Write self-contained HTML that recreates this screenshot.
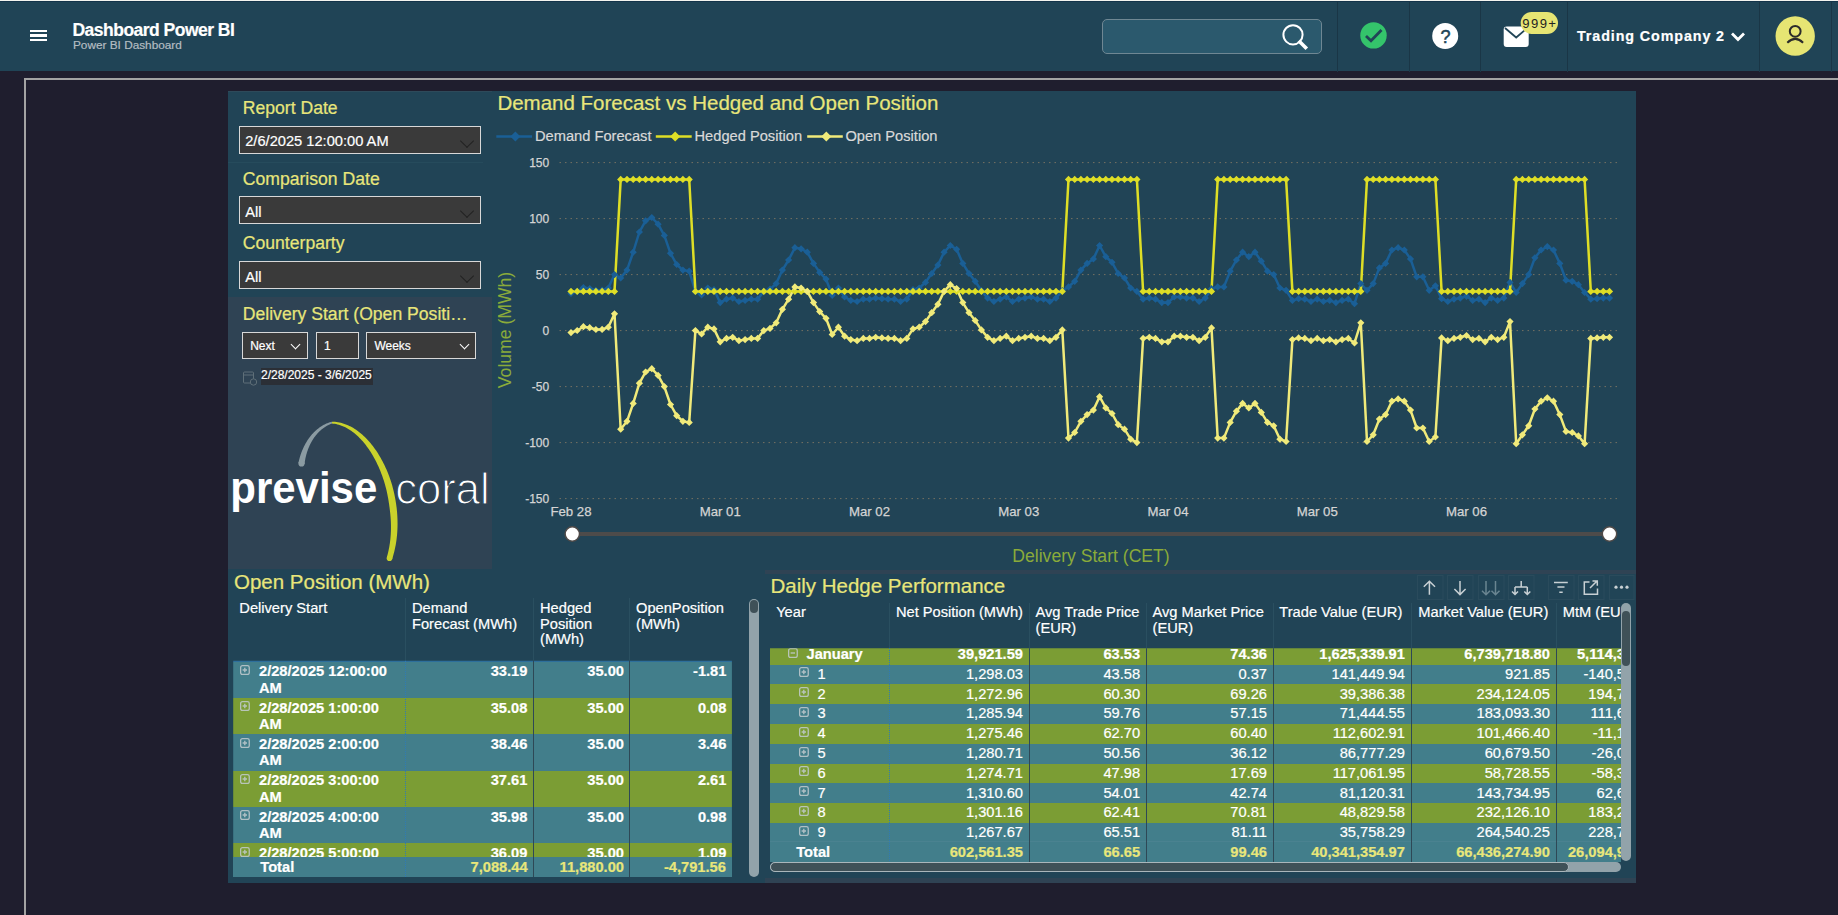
<!DOCTYPE html>
<html><head><meta charset="utf-8">
<style>
*{margin:0;padding:0;box-sizing:border-box}
html,body{width:1838px;height:915px;overflow:hidden;background:#1f1e2e;font-family:"Liberation Sans",sans-serif}
body *{-webkit-text-stroke:0.2px currentColor}
.a{position:absolute}
#hdr{position:absolute;left:0;top:0;width:1838px;height:71px;background:#204456;border-top:1px solid #f4f4ef;box-shadow:inset 0 1px 0 #14344a}
.vd{position:absolute;top:1px;width:1px;height:70px;background:#1a3646}
.t{position:absolute;white-space:nowrap;font-size:14.67px;line-height:16px;color:#fff}
.b{font-weight:bold}
.yl{color:#e8e67a}
.num{text-align:right}
.r{position:absolute}
.bt{position:absolute;white-space:nowrap;font-size:14.67px;line-height:16.2px;color:#fff;font-weight:bold}
.exp{position:absolute;width:9.4px;height:9.6px;border:1.3px solid #c3ccd0;border-radius:2px;opacity:.8}
.exp:before{content:"";position:absolute;left:1.4px;top:2.9px;width:4px;height:1.2px;background:#c3ccd0}
.exp:after{content:"";position:absolute;left:2.8px;top:1.5px;width:1.2px;height:4px;background:#c3ccd0}
.exp.minus:after{display:none}
.sl{position:absolute;white-space:nowrap;font-size:17.6px;line-height:20px;color:#e8e67a;margin-left:0.3px}
.dd{position:absolute;left:239.2px;width:241.8px;height:27.9px;background:#3a3a3a;border:1.5px solid #d8d8d8}
.dd span{position:absolute;left:5px;top:6.4px;font-size:14.67px;line-height:16px;color:#fff;white-space:nowrap}
.dd i{position:absolute;right:8px;top:9px;width:10px;height:10px;border-right:1px solid #222;border-bottom:1px solid #222;transform:rotate(45deg)}
.hh{position:absolute;white-space:nowrap;font-size:14.67px;line-height:15.6px;color:#fff;margin-top:2px}
.tb{position:absolute;top:575.5px;width:25.5px;height:24px;border:1px solid #2a4b5c}
</style></head>
<body>
<!-- HEADER -->
<div id="hdr">
 <div class="a" style="left:30px;top:29px;width:16.7px;height:2.3px;background:#fff"></div>
 <div class="a" style="left:30px;top:33.4px;width:16.7px;height:2.3px;background:#fff"></div>
 <div class="a" style="left:30px;top:38px;width:16.7px;height:2.3px;background:#fff"></div>
 <div class="a" style="left:72.5px;top:18.6px;font-size:17.5px;line-height:20px;font-weight:bold;color:#fff;white-space:nowrap;letter-spacing:-0.52px">Dashboard Power BI</div>
 <div class="a" style="left:73px;top:37px;font-size:11.8px;line-height:14px;color:#b4bdc2;white-space:nowrap">Power BI Dashboard</div>
 <div class="a" style="left:1102px;top:18px;width:220px;height:35px;background:#2b596d;border:1px solid #6f8793;border-radius:5px"></div>
 <svg class="a" style="left:1270px;top:10px" width="50" height="50">
  <circle cx="23" cy="23.8" r="9.6" fill="none" stroke="#fff" stroke-width="2"/>
  <path d="M30,31 L35.5,36.5" stroke="#fff" stroke-width="3.6" stroke-linecap="square"/>
 </svg>
 <div class="vd" style="left:1337px"></div>
 <div class="vd" style="left:1409px"></div>
 <div class="vd" style="left:1480px"></div>
 <div class="vd" style="left:1566.5px"></div>
 <div class="vd" style="left:1759px"></div>
 <div class="vd" style="left:1831px"></div>
 <svg class="a" style="left:1350px;top:11px" width="50" height="50">
  <circle cx="23.5" cy="23.4" r="13.2" fill="#34c46b"/>
  <path d="M16,24 L21,28.8 L31.5,18" fill="none" stroke="#214557" stroke-width="2.8"/>
 </svg>
 <svg class="a" style="left:1420px;top:11.3px" width="50" height="50">
  <circle cx="25.2" cy="24" r="13" fill="#fff"/>
  <text x="25.4" y="30.6" font-family="Liberation Sans" font-size="18" fill="#214557" stroke="#214557" stroke-width="0.5" text-anchor="middle">?</text>
 </svg>
 <svg class="a" style="left:1490px;top:-0.9px" width="80" height="60">
  <rect x="13.7" y="26.5" width="25" height="20.5" rx="3" fill="#fff"/>
  <path d="M15,28 L26.2,37.5 L37.4,28" fill="none" stroke="#214557" stroke-width="1.8"/>
  <rect x="30.7" y="12" width="37.3" height="22" rx="11" fill="#e6e573"/>
  <text x="49.5" y="28.2" font-family="Liberation Mono" font-size="13" fill="#222" text-anchor="middle" letter-spacing="0.9">999+</text>
 </svg>
 <div class="a" style="left:1577px;top:26px;font-size:14.3px;line-height:18px;font-weight:bold;color:#fff;white-space:nowrap;letter-spacing:0.9px">Trading Company 2</div>
 <svg class="a" style="left:1725px;top:20px" width="30" height="30">
  <path d="M7,12.6 L13,18.6 L19,12.6" fill="none" stroke="#fff" stroke-width="2.8"/>
 </svg>
 <svg class="a" style="left:1770px;top:10px" width="50" height="50">
  <circle cx="25.2" cy="25" r="19.7" fill="#e6e573"/>
  <circle cx="25.2" cy="20.3" r="5.4" fill="none" stroke="#2b2b2b" stroke-width="2"/>
  <path d="M17.3,31.7 Q25.2,24 33.1,31.7" fill="none" stroke="#2b2b2b" stroke-width="2"/>
 </svg>
</div>
<!-- FRAME -->
<div class="a" style="left:24px;top:78px;width:1814px;height:2px;background:#a3a3a3"></div>
<div class="a" style="left:24px;top:78px;width:2px;height:837px;background:#a3a3a3"></div>

<!-- SLICER PANEL -->
<div class="a" style="left:228px;top:91px;width:264px;height:206px;background:#214456"></div>
<div class="a" style="left:228px;top:162px;width:255px;height:1px;background:#264b5c"></div>
<div class="a" style="left:228px;top:91px;width:264px;height:1px;background:#2e4a5a"></div>
<div class="sl" style="left:242.5px;top:97.5px">Report Date</div>
<div class="dd" style="top:125.9px"><span>2/6/2025 12:00:00 AM</span><i></i></div>
<div class="sl" style="left:242.5px;top:168.5px">Comparison Date</div>
<div class="dd" style="top:196.3px"><span>All</span><i></i></div>
<div class="sl" style="left:242.5px;top:233px">Counterparty</div>
<div class="dd" style="top:261.2px"><span>All</span><i></i></div>

<!-- DELIVERY PANEL -->
<div class="a" style="left:228px;top:297px;width:264px;height:272px;background:#2f4354"></div>
<div class="sl" style="left:242.5px;top:303.5px">Delivery Start (Open Positi…</div>
<div class="a" style="left:242.2px;top:332.1px;width:65.5px;height:27.4px;background:#3a3a3a;border:1.3px solid #d8d8d8">
 <span class="a" style="left:7px;top:5.5px;font-size:12px;line-height:14px;color:#fff">Next</span>
 <i class="a" style="left:49px;top:7.5px;width:7px;height:7px;border-right:1.2px solid #fff;border-bottom:1.2px solid #fff;transform:rotate(45deg)"></i>
</div>
<div class="a" style="left:316px;top:332.1px;width:42.8px;height:27.4px;background:#3a3a3a;border:1.3px solid #d8d8d8">
 <span class="a" style="left:7px;top:5.5px;font-size:12px;line-height:14px;color:#fff">1</span>
</div>
<div class="a" style="left:366.4px;top:332.1px;width:109.4px;height:27.4px;background:#3a3a3a;border:1.3px solid #d8d8d8">
 <span class="a" style="left:7px;top:5.5px;font-size:12px;line-height:14px;color:#fff">Weeks</span>
 <i class="a" style="left:93.5px;top:7.5px;width:7px;height:7px;border-right:1.2px solid #fff;border-bottom:1.2px solid #fff;transform:rotate(45deg)"></i>
</div>
<svg class="a" style="left:240px;top:368px" width="20" height="20">
 <rect x="3.5" y="4" width="10" height="11" rx="1" fill="none" stroke="#5f6f78" stroke-width="1"/>
 <line x1="3.5" y1="7" x2="13.5" y2="7" stroke="#5f6f78"/>
 <circle cx="13.5" cy="14" r="3.2" fill="#2f4354" stroke="#5f6f78"/>
</svg>
<div class="a" style="left:261px;top:368.4px;width:111.8px;height:16.4px;background:#2b2f36"></div>
<div class="a" style="left:261px;top:367.5px;font-size:12px;line-height:14px;color:#fff;white-space:nowrap">2/28/2025 - 3/6/2025</div>
<!-- LOGO -->
<svg class="a" style="left:228px;top:400px" width="264" height="170">
 
 <path d="M76.56,63.99 L76.65,63.17 L76.75,62.38 L76.87,61.58 L76.99,60.78 L77.13,59.97 L77.28,59.16 L77.44,58.34 L77.61,57.53 L77.80,56.71 L78.00,55.89 L78.21,55.08 L78.43,54.26 L78.67,53.44 L78.92,52.62 L79.18,51.80 L79.45,50.99 L79.74,50.18 L80.03,49.37 L80.34,48.56 L80.67,47.75 L81.00,46.95 L81.35,46.16 L81.71,45.37 L82.09,44.58 L82.47,43.80 L82.87,43.03 L83.28,42.26 L83.71,41.50 L84.14,40.75 L84.59,40.01 L85.06,39.27 L85.53,38.54 L86.02,37.83 L86.52,37.12 L87.04,36.42 L87.56,35.73 L88.10,35.06 L88.66,34.39 L89.22,33.74 L89.80,33.09 L90.39,32.46 L91.00,31.85 L91.62,31.25 L92.25,30.66 L92.90,30.08 L93.56,29.52 L94.23,28.98 L94.92,28.45 L95.62,27.93 L96.33,27.44 L97.06,26.96 L97.80,26.49 L98.56,26.05 L99.33,25.62 L100.11,25.21 L100.91,24.82 L101.73,24.45 L102.56,24.10 L103.40,23.77 L104.27,23.46 L103.73,21.74 L102.81,21.99 L101.90,22.27 L100.99,22.57 L100.10,22.89 L99.22,23.24 L98.35,23.60 L97.49,23.99 L96.65,24.40 L95.82,24.83 L95.00,25.28 L94.19,25.75 L93.40,26.24 L92.61,26.75 L91.84,27.27 L91.09,27.81 L90.34,28.38 L89.61,28.95 L88.89,29.55 L88.19,30.16 L87.50,30.78 L86.82,31.42 L86.15,32.07 L85.49,32.74 L84.85,33.42 L84.23,34.12 L83.61,34.82 L83.01,35.54 L82.42,36.27 L81.84,37.02 L81.28,37.77 L80.73,38.53 L80.19,39.30 L79.67,40.08 L79.16,40.87 L78.66,41.67 L78.18,42.48 L77.71,43.29 L77.25,44.11 L76.80,44.94 L76.37,45.77 L75.95,46.61 L75.54,47.45 L75.15,48.30 L74.77,49.16 L74.40,50.01 L74.05,50.87 L73.71,51.74 L73.38,52.60 L73.06,53.47 L72.76,54.34 L72.47,55.21 L72.19,56.08 L71.93,56.95 L71.67,57.82 L71.44,58.70 L71.21,59.57 L71.00,60.44 L70.80,61.31 L70.61,62.17 L70.44,63.01Z" fill="#8b9ba2"/><circle cx="73.5" cy="63.5" r="3.1" fill="#8b9ba2"/><path d="M103.94,23.50 L105.36,23.65 L106.75,23.86 L108.13,24.12 L109.49,24.44 L110.83,24.80 L112.17,25.22 L113.48,25.69 L114.79,26.20 L116.08,26.76 L117.35,27.36 L118.61,28.02 L119.86,28.71 L121.09,29.45 L122.31,30.23 L123.51,31.05 L124.70,31.91 L125.88,32.81 L127.04,33.75 L128.18,34.73 L129.31,35.75 L130.43,36.80 L131.53,37.88 L132.61,39.00 L133.68,40.15 L134.73,41.34 L135.77,42.56 L136.79,43.80 L137.79,45.08 L138.78,46.38 L139.75,47.71 L140.70,49.07 L141.63,50.46 L142.55,51.87 L143.45,53.30 L144.33,54.75 L145.19,56.23 L146.03,57.73 L146.86,59.25 L147.66,60.78 L148.45,62.34 L149.21,63.91 L149.96,65.50 L150.68,67.10 L151.39,68.71 L152.07,70.34 L152.73,71.99 L153.37,73.64 L153.99,75.30 L154.59,76.97 L155.16,78.65 L155.72,80.34 L156.25,82.03 L156.75,83.73 L157.24,85.43 L157.70,87.14 L158.13,88.84 L158.55,90.55 L158.93,92.26 L159.30,93.97 L159.64,95.68 L159.87,96.90 L160.09,98.12 L160.30,99.33 L160.50,100.53 L160.69,101.72 L160.88,102.90 L161.06,104.07 L161.22,105.24 L161.38,106.40 L161.54,107.55 L161.68,108.69 L161.82,109.83 L161.96,110.95 L162.09,112.07 L162.21,113.18 L162.32,114.28 L162.42,115.38 L162.52,116.47 L162.60,117.55 L162.68,118.63 L162.75,119.70 L162.80,120.76 L162.85,121.82 L162.89,122.87 L162.92,123.92 L162.95,124.96 L162.96,125.99 L162.97,127.02 L162.96,128.04 L162.95,129.05 L162.93,130.06 L162.90,131.07 L162.87,132.07 L162.82,133.06 L162.77,134.05 L162.71,135.03 L162.64,136.01 L162.56,136.99 L162.47,137.95 L162.38,138.92 L162.27,139.88 L162.16,140.83 L162.04,141.79 L161.92,142.73 L161.78,143.68 L161.64,144.61 L161.49,145.55 L161.33,146.48 L161.16,147.41 L160.99,148.33 L160.80,149.25 L160.61,150.17 L160.42,151.08 L160.21,151.99 L160.00,152.90 L159.78,153.80 L159.55,154.70 L159.31,155.60 L159.07,156.50 L158.82,157.40 L164.18,159.00 L164.47,158.08 L164.76,157.15 L165.03,156.21 L165.30,155.27 L165.56,154.32 L165.82,153.37 L166.06,152.42 L166.30,151.46 L166.53,150.50 L166.75,149.54 L166.96,148.57 L167.17,147.60 L167.37,146.62 L167.56,145.64 L167.74,144.65 L167.91,143.66 L168.07,142.66 L168.23,141.66 L168.37,140.65 L168.51,139.64 L168.64,138.63 L168.77,137.61 L168.88,136.58 L168.98,135.55 L169.08,134.51 L169.16,133.47 L169.24,132.42 L169.31,131.37 L169.37,130.31 L169.42,129.25 L169.46,128.18 L169.50,127.10 L169.52,126.02 L169.54,124.93 L169.54,123.84 L169.54,122.74 L169.53,121.63 L169.50,120.52 L169.47,119.40 L169.43,118.27 L169.38,117.14 L169.32,116.00 L169.25,114.86 L169.18,113.70 L169.09,112.55 L168.99,111.38 L168.88,110.21 L168.77,109.03 L168.63,107.84 L168.48,106.65 L168.32,105.45 L168.14,104.24 L167.96,103.03 L167.76,101.81 L167.56,100.58 L167.34,99.34 L167.11,98.10 L166.87,96.85 L166.62,95.59 L166.36,94.32 L165.97,92.53 L165.56,90.74 L165.12,88.94 L164.65,87.15 L164.15,85.36 L163.62,83.58 L163.07,81.80 L162.49,80.03 L161.89,78.27 L161.26,76.51 L160.61,74.76 L159.93,73.03 L159.22,71.30 L158.50,69.59 L157.74,67.89 L156.97,66.21 L156.17,64.54 L155.34,62.89 L154.50,61.25 L153.63,59.63 L152.73,58.04 L151.82,56.46 L150.89,54.90 L149.93,53.37 L148.95,51.86 L147.95,50.37 L146.93,48.91 L145.89,47.47 L144.83,46.07 L143.75,44.69 L142.65,43.34 L141.53,42.02 L140.40,40.73 L139.24,39.47 L138.07,38.25 L136.88,37.06 L135.67,35.91 L134.45,34.80 L133.20,33.72 L131.94,32.68 L130.67,31.68 L129.38,30.73 L128.08,29.81 L126.76,28.94 L125.42,28.11 L124.07,27.33 L122.71,26.59 L121.34,25.90 L119.95,25.26 L118.56,24.67 L117.15,24.13 L115.73,23.64 L114.29,23.21 L112.85,22.82 L111.40,22.50 L109.95,22.22 L108.48,22.01 L107.01,21.85 L105.53,21.74 L104.06,21.70Z" fill="#c9d22b"/><circle cx="161.5" cy="158.2" r="2.8" fill="#c9d22b"/>
 <text x="2.3" y="103.4" font-family="Liberation Sans" font-weight="bold" font-size="45" fill="#fff" textLength="147" lengthAdjust="spacingAndGlyphs">previse</text>
 <text x="167.2" y="103.6" font-family="Liberation Sans" font-size="44" fill="#fff" textLength="94.5" lengthAdjust="spacingAndGlyphs" stroke="#2f4354" stroke-width="1.2">coral</text>
</svg>

<!-- CHART VISUAL -->
<div class="a" style="left:492px;top:91px;width:1144px;height:479px;background:#214456"></div>

<svg width="1838" height="915" style="position:absolute;left:0;top:0">
 <g stroke="#8a7c66" stroke-width="1" stroke-dasharray="1.5 4" fill="none" opacity="0.8">
  <line x1="559.5" x2="1618" y1="162.6" y2="162.6"/><line x1="559.5" x2="1618" y1="218.6" y2="218.6"/><line x1="559.5" x2="1618" y1="274.6" y2="274.6"/><line x1="559.5" x2="1618" y1="330.6" y2="330.6"/><line x1="559.5" x2="1618" y1="386.6" y2="386.6"/><line x1="559.5" x2="1618" y1="442.6" y2="442.6"/><line x1="559.5" x2="1618" y1="498.6" y2="498.6"/>
 </g>
 <g font-family="Liberation Sans" font-size="12" fill="#d4d4d4" stroke="#d4d4d4" stroke-width="0.25" text-anchor="end">
  <text x="549.2" y="166.9">150</text><text x="549.2" y="222.9">100</text><text x="549.2" y="278.9">50</text><text x="549.2" y="334.9">0</text><text x="549.2" y="390.9">-50</text><text x="549.2" y="446.9">-100</text><text x="549.2" y="502.9">-150</text>
 </g>
 <g font-family="Liberation Sans" font-size="13.2" fill="#d4d4d4" stroke="#d4d4d4" stroke-width="0.25" text-anchor="middle">
  <text x="571.0" y="515.7">Feb 28</text><text x="720.2" y="515.7">Mar 01</text><text x="869.5" y="515.7">Mar 02</text><text x="1018.7" y="515.7">Mar 03</text><text x="1168.0" y="515.7">Mar 04</text><text x="1317.2" y="515.7">Mar 05</text><text x="1466.5" y="515.7">Mar 06</text>
 </g>
 <text transform="translate(511,330) rotate(-90)" font-family="Liberation Sans" font-size="17.6" fill="#8aab3a" text-anchor="middle">Volume (MWh)</text>
 <path d="M571.0,293.4 L577.2,291.3 L583.4,287.5 L589.7,288.5 L595.9,290.3 L602.1,290.2 L608.3,288.0 L614.5,274.6 L620.7,278.0 L627.0,270.1 L633.2,252.2 L639.4,232.0 L645.6,220.8 L651.8,217.5 L658.1,224.2 L664.3,235.4 L670.5,253.3 L676.7,264.5 L682.9,270.1 L689.2,271.2 L695.4,291.4 L701.6,294.8 L707.8,288.0 L714.0,289.7 L720.2,302.6 L726.5,299.2 L732.7,298.1 L738.9,301.5 L745.1,300.4 L751.3,299.2 L757.6,299.2 L763.8,291.4 L770.0,289.2 L776.2,283.6 L782.4,270.1 L788.6,260.0 L794.9,247.7 L801.1,248.8 L807.3,252.2 L813.5,263.4 L819.7,272.4 L826.0,279.1 L832.2,295.3 L838.4,288.0 L844.6,297.0 L850.8,300.4 L857.1,301.5 L863.3,299.2 L869.5,299.2 L875.7,298.1 L881.9,298.7 L888.1,299.2 L894.4,299.2 L900.6,301.5 L906.8,299.2 L913.0,289.7 L919.2,288.0 L925.5,282.4 L931.7,273.5 L937.9,265.1 L944.1,252.2 L950.3,245.5 L956.6,249.3 L962.8,263.4 L969.0,273.5 L975.2,281.3 L981.4,290.7 L987.6,298.1 L993.9,301.5 L1000.1,299.2 L1006.3,297.0 L1012.5,301.5 L1018.7,299.2 L1025.0,298.1 L1031.2,297.0 L1037.4,299.2 L1043.6,299.2 L1049.8,301.5 L1056.0,298.1 L1062.3,290.7 L1068.5,286.9 L1074.7,281.3 L1080.9,270.1 L1087.1,263.4 L1093.4,258.9 L1099.6,245.5 L1105.8,256.7 L1112.0,262.3 L1118.2,273.5 L1124.5,278.0 L1130.7,288.0 L1136.9,291.4 L1143.1,299.2 L1149.3,298.1 L1155.5,299.2 L1161.8,302.6 L1168.0,302.6 L1174.2,297.0 L1180.4,297.0 L1186.6,298.1 L1192.9,298.1 L1199.1,301.5 L1205.3,298.1 L1211.5,288.7 L1217.7,286.9 L1223.9,286.9 L1230.2,271.2 L1236.4,260.0 L1242.6,252.2 L1248.8,256.7 L1255.0,252.2 L1261.3,261.2 L1267.5,271.2 L1273.7,274.6 L1279.9,288.0 L1286.1,290.3 L1292.4,300.4 L1298.6,298.7 L1304.8,299.2 L1311.0,301.5 L1317.2,299.2 L1323.4,301.5 L1329.7,300.4 L1335.9,302.6 L1342.1,300.4 L1348.3,299.2 L1354.5,303.7 L1360.8,283.6 L1367.0,290.3 L1373.2,283.6 L1379.4,267.9 L1385.6,263.4 L1391.9,250.0 L1398.1,247.7 L1404.3,250.0 L1410.5,258.9 L1416.7,276.8 L1422.9,276.8 L1429.2,290.3 L1435.4,285.8 L1441.6,298.7 L1447.8,301.5 L1454.0,299.2 L1460.3,298.1 L1466.5,296.3 L1472.7,300.4 L1478.9,299.2 L1485.1,302.6 L1491.3,298.1 L1497.6,300.4 L1503.8,298.1 L1510.0,282.4 L1516.2,292.5 L1522.4,283.6 L1528.7,274.6 L1534.9,257.8 L1541.1,250.0 L1547.3,246.6 L1553.5,250.0 L1559.8,263.4 L1566.0,280.2 L1572.2,281.3 L1578.4,284.7 L1584.6,292.5 L1590.8,299.2 L1597.1,298.7 L1603.3,298.1 L1609.5,298.1" stroke="#1a5f96" stroke-width="2.5" fill="none" stroke-linejoin="round"/>
 <path d="M571.0,291.4 L577.2,291.4 L583.4,291.4 L589.7,291.4 L595.9,291.4 L602.1,291.4 L608.3,291.4 L614.5,291.4 L620.7,179.4 L627.0,179.4 L633.2,179.4 L639.4,179.4 L645.6,179.4 L651.8,179.4 L658.1,179.4 L664.3,179.4 L670.5,179.4 L676.7,179.4 L682.9,179.4 L689.2,179.4 L695.4,291.4 L701.6,291.4 L707.8,291.4 L714.0,291.4 L720.2,291.4 L726.5,291.4 L732.7,291.4 L738.9,291.4 L745.1,291.4 L751.3,291.4 L757.6,291.4 L763.8,291.4 L770.0,291.4 L776.2,291.4 L782.4,291.4 L788.6,291.4 L794.9,291.4 L801.1,291.4 L807.3,291.4 L813.5,291.4 L819.7,291.4 L826.0,291.4 L832.2,291.4 L838.4,291.4 L844.6,291.4 L850.8,291.4 L857.1,291.4 L863.3,291.4 L869.5,291.4 L875.7,291.4 L881.9,291.4 L888.1,291.4 L894.4,291.4 L900.6,291.4 L906.8,291.4 L913.0,291.4 L919.2,291.4 L925.5,291.4 L931.7,291.4 L937.9,291.4 L944.1,291.4 L950.3,291.4 L956.6,291.4 L962.8,291.4 L969.0,291.4 L975.2,291.4 L981.4,291.4 L987.6,291.4 L993.9,291.4 L1000.1,291.4 L1006.3,291.4 L1012.5,291.4 L1018.7,291.4 L1025.0,291.4 L1031.2,291.4 L1037.4,291.4 L1043.6,291.4 L1049.8,291.4 L1056.0,291.4 L1062.3,291.4 L1068.5,179.4 L1074.7,179.4 L1080.9,179.4 L1087.1,179.4 L1093.4,179.4 L1099.6,179.4 L1105.8,179.4 L1112.0,179.4 L1118.2,179.4 L1124.5,179.4 L1130.7,179.4 L1136.9,179.4 L1143.1,291.4 L1149.3,291.4 L1155.5,291.4 L1161.8,291.4 L1168.0,291.4 L1174.2,291.4 L1180.4,291.4 L1186.6,291.4 L1192.9,291.4 L1199.1,291.4 L1205.3,291.4 L1211.5,291.4 L1217.7,179.4 L1223.9,179.4 L1230.2,179.4 L1236.4,179.4 L1242.6,179.4 L1248.8,179.4 L1255.0,179.4 L1261.3,179.4 L1267.5,179.4 L1273.7,179.4 L1279.9,179.4 L1286.1,179.4 L1292.4,291.4 L1298.6,291.4 L1304.8,291.4 L1311.0,291.4 L1317.2,291.4 L1323.4,291.4 L1329.7,291.4 L1335.9,291.4 L1342.1,291.4 L1348.3,291.4 L1354.5,291.4 L1360.8,291.4 L1367.0,179.4 L1373.2,179.4 L1379.4,179.4 L1385.6,179.4 L1391.9,179.4 L1398.1,179.4 L1404.3,179.4 L1410.5,179.4 L1416.7,179.4 L1422.9,179.4 L1429.2,179.4 L1435.4,179.4 L1441.6,291.4 L1447.8,291.4 L1454.0,291.4 L1460.3,291.4 L1466.5,291.4 L1472.7,291.4 L1478.9,291.4 L1485.1,291.4 L1491.3,291.4 L1497.6,291.4 L1503.8,291.4 L1510.0,291.4 L1516.2,179.4 L1522.4,179.4 L1528.7,179.4 L1534.9,179.4 L1541.1,179.4 L1547.3,179.4 L1553.5,179.4 L1559.8,179.4 L1566.0,179.4 L1572.2,179.4 L1578.4,179.4 L1584.6,179.4 L1590.8,291.4 L1597.1,291.4 L1603.3,291.4 L1609.5,291.4" stroke="#dede26" stroke-width="2.5" fill="none" stroke-linejoin="round"/>
 <path d="M571.0,332.6 L577.2,330.5 L583.4,326.7 L589.7,327.7 L595.9,329.5 L602.1,329.4 L608.3,327.2 L614.5,313.8 L620.7,429.2 L627.0,421.3 L633.2,403.4 L639.4,383.2 L645.6,372.0 L651.8,368.7 L658.1,375.4 L664.3,386.6 L670.5,404.5 L676.7,415.7 L682.9,421.3 L689.2,422.4 L695.4,330.6 L701.6,334.0 L707.8,327.2 L714.0,328.9 L720.2,341.8 L726.5,338.4 L732.7,337.3 L738.9,340.7 L745.1,339.6 L751.3,338.4 L757.6,338.4 L763.8,330.6 L770.0,328.4 L776.2,322.8 L782.4,309.3 L788.6,299.2 L794.9,286.9 L801.1,288.0 L807.3,291.4 L813.5,302.6 L819.7,311.6 L826.0,318.3 L832.2,334.5 L838.4,327.2 L844.6,336.2 L850.8,339.6 L857.1,340.7 L863.3,338.4 L869.5,338.4 L875.7,337.3 L881.9,337.9 L888.1,338.4 L894.4,338.4 L900.6,340.7 L906.8,338.4 L913.0,328.9 L919.2,327.2 L925.5,321.6 L931.7,312.7 L937.9,304.3 L944.1,291.4 L950.3,284.7 L956.6,288.5 L962.8,302.6 L969.0,312.7 L975.2,320.5 L981.4,329.9 L987.6,337.3 L993.9,340.7 L1000.1,338.4 L1006.3,336.2 L1012.5,340.7 L1018.7,338.4 L1025.0,337.3 L1031.2,336.2 L1037.4,338.4 L1043.6,338.4 L1049.8,340.7 L1056.0,337.3 L1062.3,329.9 L1068.5,438.1 L1074.7,432.5 L1080.9,421.3 L1087.1,414.6 L1093.4,410.1 L1099.6,396.7 L1105.8,407.9 L1112.0,413.5 L1118.2,424.7 L1124.5,429.2 L1130.7,439.2 L1136.9,442.6 L1143.1,338.4 L1149.3,337.3 L1155.5,338.4 L1161.8,341.8 L1168.0,341.8 L1174.2,336.2 L1180.4,336.2 L1186.6,337.3 L1192.9,337.3 L1199.1,340.7 L1205.3,337.3 L1211.5,327.9 L1217.7,438.1 L1223.9,438.1 L1230.2,422.4 L1236.4,411.2 L1242.6,403.4 L1248.8,407.9 L1255.0,403.4 L1261.3,412.4 L1267.5,422.4 L1273.7,425.8 L1279.9,439.2 L1286.1,441.5 L1292.4,339.6 L1298.6,337.9 L1304.8,338.4 L1311.0,340.7 L1317.2,338.4 L1323.4,340.7 L1329.7,339.6 L1335.9,341.8 L1342.1,339.6 L1348.3,338.4 L1354.5,342.9 L1360.8,322.8 L1367.0,441.5 L1373.2,434.8 L1379.4,419.1 L1385.6,414.6 L1391.9,401.2 L1398.1,398.9 L1404.3,401.2 L1410.5,410.1 L1416.7,428.0 L1422.9,428.0 L1429.2,441.5 L1435.4,437.0 L1441.6,337.9 L1447.8,340.7 L1454.0,338.4 L1460.3,337.3 L1466.5,335.5 L1472.7,339.6 L1478.9,338.4 L1485.1,341.8 L1491.3,337.3 L1497.6,339.6 L1503.8,337.3 L1510.0,321.6 L1516.2,443.7 L1522.4,434.8 L1528.7,425.8 L1534.9,409.0 L1541.1,401.2 L1547.3,397.8 L1553.5,401.2 L1559.8,414.6 L1566.0,431.4 L1572.2,432.5 L1578.4,435.9 L1584.6,443.7 L1590.8,338.4 L1597.1,337.9 L1603.3,337.3 L1609.5,337.3" stroke="#f0ea7a" stroke-width="2.5" fill="none" stroke-linejoin="round"/>
 <path d="M571.0,289.8l3.6,3.6l-3.6,3.6l-3.6,-3.6zM577.2,287.7l3.6,3.6l-3.6,3.6l-3.6,-3.6zM583.4,283.9l3.6,3.6l-3.6,3.6l-3.6,-3.6zM589.7,284.9l3.6,3.6l-3.6,3.6l-3.6,-3.6zM595.9,286.7l3.6,3.6l-3.6,3.6l-3.6,-3.6zM602.1,286.6l3.6,3.6l-3.6,3.6l-3.6,-3.6zM608.3,284.4l3.6,3.6l-3.6,3.6l-3.6,-3.6zM614.5,271.0l3.6,3.6l-3.6,3.6l-3.6,-3.6zM620.7,274.4l3.6,3.6l-3.6,3.6l-3.6,-3.6zM627.0,266.5l3.6,3.6l-3.6,3.6l-3.6,-3.6zM633.2,248.6l3.6,3.6l-3.6,3.6l-3.6,-3.6zM639.4,228.4l3.6,3.6l-3.6,3.6l-3.6,-3.6zM645.6,217.2l3.6,3.6l-3.6,3.6l-3.6,-3.6zM651.8,213.9l3.6,3.6l-3.6,3.6l-3.6,-3.6zM658.1,220.6l3.6,3.6l-3.6,3.6l-3.6,-3.6zM664.3,231.8l3.6,3.6l-3.6,3.6l-3.6,-3.6zM670.5,249.7l3.6,3.6l-3.6,3.6l-3.6,-3.6zM676.7,260.9l3.6,3.6l-3.6,3.6l-3.6,-3.6zM682.9,266.5l3.6,3.6l-3.6,3.6l-3.6,-3.6zM689.2,267.6l3.6,3.6l-3.6,3.6l-3.6,-3.6zM695.4,287.8l3.6,3.6l-3.6,3.6l-3.6,-3.6zM701.6,291.2l3.6,3.6l-3.6,3.6l-3.6,-3.6zM707.8,284.4l3.6,3.6l-3.6,3.6l-3.6,-3.6zM714.0,286.1l3.6,3.6l-3.6,3.6l-3.6,-3.6zM720.2,299.0l3.6,3.6l-3.6,3.6l-3.6,-3.6zM726.5,295.6l3.6,3.6l-3.6,3.6l-3.6,-3.6zM732.7,294.5l3.6,3.6l-3.6,3.6l-3.6,-3.6zM738.9,297.9l3.6,3.6l-3.6,3.6l-3.6,-3.6zM745.1,296.8l3.6,3.6l-3.6,3.6l-3.6,-3.6zM751.3,295.6l3.6,3.6l-3.6,3.6l-3.6,-3.6zM757.6,295.6l3.6,3.6l-3.6,3.6l-3.6,-3.6zM763.8,287.8l3.6,3.6l-3.6,3.6l-3.6,-3.6zM770.0,285.6l3.6,3.6l-3.6,3.6l-3.6,-3.6zM776.2,280.0l3.6,3.6l-3.6,3.6l-3.6,-3.6zM782.4,266.5l3.6,3.6l-3.6,3.6l-3.6,-3.6zM788.6,256.4l3.6,3.6l-3.6,3.6l-3.6,-3.6zM794.9,244.1l3.6,3.6l-3.6,3.6l-3.6,-3.6zM801.1,245.2l3.6,3.6l-3.6,3.6l-3.6,-3.6zM807.3,248.6l3.6,3.6l-3.6,3.6l-3.6,-3.6zM813.5,259.8l3.6,3.6l-3.6,3.6l-3.6,-3.6zM819.7,268.8l3.6,3.6l-3.6,3.6l-3.6,-3.6zM826.0,275.5l3.6,3.6l-3.6,3.6l-3.6,-3.6zM832.2,291.7l3.6,3.6l-3.6,3.6l-3.6,-3.6zM838.4,284.4l3.6,3.6l-3.6,3.6l-3.6,-3.6zM844.6,293.4l3.6,3.6l-3.6,3.6l-3.6,-3.6zM850.8,296.8l3.6,3.6l-3.6,3.6l-3.6,-3.6zM857.1,297.9l3.6,3.6l-3.6,3.6l-3.6,-3.6zM863.3,295.6l3.6,3.6l-3.6,3.6l-3.6,-3.6zM869.5,295.6l3.6,3.6l-3.6,3.6l-3.6,-3.6zM875.7,294.5l3.6,3.6l-3.6,3.6l-3.6,-3.6zM881.9,295.1l3.6,3.6l-3.6,3.6l-3.6,-3.6zM888.1,295.6l3.6,3.6l-3.6,3.6l-3.6,-3.6zM894.4,295.6l3.6,3.6l-3.6,3.6l-3.6,-3.6zM900.6,297.9l3.6,3.6l-3.6,3.6l-3.6,-3.6zM906.8,295.6l3.6,3.6l-3.6,3.6l-3.6,-3.6zM913.0,286.1l3.6,3.6l-3.6,3.6l-3.6,-3.6zM919.2,284.4l3.6,3.6l-3.6,3.6l-3.6,-3.6zM925.5,278.8l3.6,3.6l-3.6,3.6l-3.6,-3.6zM931.7,269.9l3.6,3.6l-3.6,3.6l-3.6,-3.6zM937.9,261.5l3.6,3.6l-3.6,3.6l-3.6,-3.6zM944.1,248.6l3.6,3.6l-3.6,3.6l-3.6,-3.6zM950.3,241.9l3.6,3.6l-3.6,3.6l-3.6,-3.6zM956.6,245.7l3.6,3.6l-3.6,3.6l-3.6,-3.6zM962.8,259.8l3.6,3.6l-3.6,3.6l-3.6,-3.6zM969.0,269.9l3.6,3.6l-3.6,3.6l-3.6,-3.6zM975.2,277.7l3.6,3.6l-3.6,3.6l-3.6,-3.6zM981.4,287.1l3.6,3.6l-3.6,3.6l-3.6,-3.6zM987.6,294.5l3.6,3.6l-3.6,3.6l-3.6,-3.6zM993.9,297.9l3.6,3.6l-3.6,3.6l-3.6,-3.6zM1000.1,295.6l3.6,3.6l-3.6,3.6l-3.6,-3.6zM1006.3,293.4l3.6,3.6l-3.6,3.6l-3.6,-3.6zM1012.5,297.9l3.6,3.6l-3.6,3.6l-3.6,-3.6zM1018.7,295.6l3.6,3.6l-3.6,3.6l-3.6,-3.6zM1025.0,294.5l3.6,3.6l-3.6,3.6l-3.6,-3.6zM1031.2,293.4l3.6,3.6l-3.6,3.6l-3.6,-3.6zM1037.4,295.6l3.6,3.6l-3.6,3.6l-3.6,-3.6zM1043.6,295.6l3.6,3.6l-3.6,3.6l-3.6,-3.6zM1049.8,297.9l3.6,3.6l-3.6,3.6l-3.6,-3.6zM1056.0,294.5l3.6,3.6l-3.6,3.6l-3.6,-3.6zM1062.3,287.1l3.6,3.6l-3.6,3.6l-3.6,-3.6zM1068.5,283.3l3.6,3.6l-3.6,3.6l-3.6,-3.6zM1074.7,277.7l3.6,3.6l-3.6,3.6l-3.6,-3.6zM1080.9,266.5l3.6,3.6l-3.6,3.6l-3.6,-3.6zM1087.1,259.8l3.6,3.6l-3.6,3.6l-3.6,-3.6zM1093.4,255.3l3.6,3.6l-3.6,3.6l-3.6,-3.6zM1099.6,241.9l3.6,3.6l-3.6,3.6l-3.6,-3.6zM1105.8,253.1l3.6,3.6l-3.6,3.6l-3.6,-3.6zM1112.0,258.7l3.6,3.6l-3.6,3.6l-3.6,-3.6zM1118.2,269.9l3.6,3.6l-3.6,3.6l-3.6,-3.6zM1124.5,274.4l3.6,3.6l-3.6,3.6l-3.6,-3.6zM1130.7,284.4l3.6,3.6l-3.6,3.6l-3.6,-3.6zM1136.9,287.8l3.6,3.6l-3.6,3.6l-3.6,-3.6zM1143.1,295.6l3.6,3.6l-3.6,3.6l-3.6,-3.6zM1149.3,294.5l3.6,3.6l-3.6,3.6l-3.6,-3.6zM1155.5,295.6l3.6,3.6l-3.6,3.6l-3.6,-3.6zM1161.8,299.0l3.6,3.6l-3.6,3.6l-3.6,-3.6zM1168.0,299.0l3.6,3.6l-3.6,3.6l-3.6,-3.6zM1174.2,293.4l3.6,3.6l-3.6,3.6l-3.6,-3.6zM1180.4,293.4l3.6,3.6l-3.6,3.6l-3.6,-3.6zM1186.6,294.5l3.6,3.6l-3.6,3.6l-3.6,-3.6zM1192.9,294.5l3.6,3.6l-3.6,3.6l-3.6,-3.6zM1199.1,297.9l3.6,3.6l-3.6,3.6l-3.6,-3.6zM1205.3,294.5l3.6,3.6l-3.6,3.6l-3.6,-3.6zM1211.5,285.1l3.6,3.6l-3.6,3.6l-3.6,-3.6zM1217.7,283.3l3.6,3.6l-3.6,3.6l-3.6,-3.6zM1223.9,283.3l3.6,3.6l-3.6,3.6l-3.6,-3.6zM1230.2,267.6l3.6,3.6l-3.6,3.6l-3.6,-3.6zM1236.4,256.4l3.6,3.6l-3.6,3.6l-3.6,-3.6zM1242.6,248.6l3.6,3.6l-3.6,3.6l-3.6,-3.6zM1248.8,253.1l3.6,3.6l-3.6,3.6l-3.6,-3.6zM1255.0,248.6l3.6,3.6l-3.6,3.6l-3.6,-3.6zM1261.3,257.6l3.6,3.6l-3.6,3.6l-3.6,-3.6zM1267.5,267.6l3.6,3.6l-3.6,3.6l-3.6,-3.6zM1273.7,271.0l3.6,3.6l-3.6,3.6l-3.6,-3.6zM1279.9,284.4l3.6,3.6l-3.6,3.6l-3.6,-3.6zM1286.1,286.7l3.6,3.6l-3.6,3.6l-3.6,-3.6zM1292.4,296.8l3.6,3.6l-3.6,3.6l-3.6,-3.6zM1298.6,295.1l3.6,3.6l-3.6,3.6l-3.6,-3.6zM1304.8,295.6l3.6,3.6l-3.6,3.6l-3.6,-3.6zM1311.0,297.9l3.6,3.6l-3.6,3.6l-3.6,-3.6zM1317.2,295.6l3.6,3.6l-3.6,3.6l-3.6,-3.6zM1323.4,297.9l3.6,3.6l-3.6,3.6l-3.6,-3.6zM1329.7,296.8l3.6,3.6l-3.6,3.6l-3.6,-3.6zM1335.9,299.0l3.6,3.6l-3.6,3.6l-3.6,-3.6zM1342.1,296.8l3.6,3.6l-3.6,3.6l-3.6,-3.6zM1348.3,295.6l3.6,3.6l-3.6,3.6l-3.6,-3.6zM1354.5,300.1l3.6,3.6l-3.6,3.6l-3.6,-3.6zM1360.8,280.0l3.6,3.6l-3.6,3.6l-3.6,-3.6zM1367.0,286.7l3.6,3.6l-3.6,3.6l-3.6,-3.6zM1373.2,280.0l3.6,3.6l-3.6,3.6l-3.6,-3.6zM1379.4,264.3l3.6,3.6l-3.6,3.6l-3.6,-3.6zM1385.6,259.8l3.6,3.6l-3.6,3.6l-3.6,-3.6zM1391.9,246.4l3.6,3.6l-3.6,3.6l-3.6,-3.6zM1398.1,244.1l3.6,3.6l-3.6,3.6l-3.6,-3.6zM1404.3,246.4l3.6,3.6l-3.6,3.6l-3.6,-3.6zM1410.5,255.3l3.6,3.6l-3.6,3.6l-3.6,-3.6zM1416.7,273.2l3.6,3.6l-3.6,3.6l-3.6,-3.6zM1422.9,273.2l3.6,3.6l-3.6,3.6l-3.6,-3.6zM1429.2,286.7l3.6,3.6l-3.6,3.6l-3.6,-3.6zM1435.4,282.2l3.6,3.6l-3.6,3.6l-3.6,-3.6zM1441.6,295.1l3.6,3.6l-3.6,3.6l-3.6,-3.6zM1447.8,297.9l3.6,3.6l-3.6,3.6l-3.6,-3.6zM1454.0,295.6l3.6,3.6l-3.6,3.6l-3.6,-3.6zM1460.3,294.5l3.6,3.6l-3.6,3.6l-3.6,-3.6zM1466.5,292.7l3.6,3.6l-3.6,3.6l-3.6,-3.6zM1472.7,296.8l3.6,3.6l-3.6,3.6l-3.6,-3.6zM1478.9,295.6l3.6,3.6l-3.6,3.6l-3.6,-3.6zM1485.1,299.0l3.6,3.6l-3.6,3.6l-3.6,-3.6zM1491.3,294.5l3.6,3.6l-3.6,3.6l-3.6,-3.6zM1497.6,296.8l3.6,3.6l-3.6,3.6l-3.6,-3.6zM1503.8,294.5l3.6,3.6l-3.6,3.6l-3.6,-3.6zM1510.0,278.8l3.6,3.6l-3.6,3.6l-3.6,-3.6zM1516.2,288.9l3.6,3.6l-3.6,3.6l-3.6,-3.6zM1522.4,280.0l3.6,3.6l-3.6,3.6l-3.6,-3.6zM1528.7,271.0l3.6,3.6l-3.6,3.6l-3.6,-3.6zM1534.9,254.2l3.6,3.6l-3.6,3.6l-3.6,-3.6zM1541.1,246.4l3.6,3.6l-3.6,3.6l-3.6,-3.6zM1547.3,243.0l3.6,3.6l-3.6,3.6l-3.6,-3.6zM1553.5,246.4l3.6,3.6l-3.6,3.6l-3.6,-3.6zM1559.8,259.8l3.6,3.6l-3.6,3.6l-3.6,-3.6zM1566.0,276.6l3.6,3.6l-3.6,3.6l-3.6,-3.6zM1572.2,277.7l3.6,3.6l-3.6,3.6l-3.6,-3.6zM1578.4,281.1l3.6,3.6l-3.6,3.6l-3.6,-3.6zM1584.6,288.9l3.6,3.6l-3.6,3.6l-3.6,-3.6zM1590.8,295.6l3.6,3.6l-3.6,3.6l-3.6,-3.6zM1597.1,295.1l3.6,3.6l-3.6,3.6l-3.6,-3.6zM1603.3,294.5l3.6,3.6l-3.6,3.6l-3.6,-3.6zM1609.5,294.5l3.6,3.6l-3.6,3.6l-3.6,-3.6z" fill="#1a5f96"/>
 <path d="M571.0,287.8l3.6,3.6l-3.6,3.6l-3.6,-3.6zM577.2,287.8l3.6,3.6l-3.6,3.6l-3.6,-3.6zM583.4,287.8l3.6,3.6l-3.6,3.6l-3.6,-3.6zM589.7,287.8l3.6,3.6l-3.6,3.6l-3.6,-3.6zM595.9,287.8l3.6,3.6l-3.6,3.6l-3.6,-3.6zM602.1,287.8l3.6,3.6l-3.6,3.6l-3.6,-3.6zM608.3,287.8l3.6,3.6l-3.6,3.6l-3.6,-3.6zM614.5,287.8l3.6,3.6l-3.6,3.6l-3.6,-3.6zM620.7,175.8l3.6,3.6l-3.6,3.6l-3.6,-3.6zM627.0,175.8l3.6,3.6l-3.6,3.6l-3.6,-3.6zM633.2,175.8l3.6,3.6l-3.6,3.6l-3.6,-3.6zM639.4,175.8l3.6,3.6l-3.6,3.6l-3.6,-3.6zM645.6,175.8l3.6,3.6l-3.6,3.6l-3.6,-3.6zM651.8,175.8l3.6,3.6l-3.6,3.6l-3.6,-3.6zM658.1,175.8l3.6,3.6l-3.6,3.6l-3.6,-3.6zM664.3,175.8l3.6,3.6l-3.6,3.6l-3.6,-3.6zM670.5,175.8l3.6,3.6l-3.6,3.6l-3.6,-3.6zM676.7,175.8l3.6,3.6l-3.6,3.6l-3.6,-3.6zM682.9,175.8l3.6,3.6l-3.6,3.6l-3.6,-3.6zM689.2,175.8l3.6,3.6l-3.6,3.6l-3.6,-3.6zM695.4,287.8l3.6,3.6l-3.6,3.6l-3.6,-3.6zM701.6,287.8l3.6,3.6l-3.6,3.6l-3.6,-3.6zM707.8,287.8l3.6,3.6l-3.6,3.6l-3.6,-3.6zM714.0,287.8l3.6,3.6l-3.6,3.6l-3.6,-3.6zM720.2,287.8l3.6,3.6l-3.6,3.6l-3.6,-3.6zM726.5,287.8l3.6,3.6l-3.6,3.6l-3.6,-3.6zM732.7,287.8l3.6,3.6l-3.6,3.6l-3.6,-3.6zM738.9,287.8l3.6,3.6l-3.6,3.6l-3.6,-3.6zM745.1,287.8l3.6,3.6l-3.6,3.6l-3.6,-3.6zM751.3,287.8l3.6,3.6l-3.6,3.6l-3.6,-3.6zM757.6,287.8l3.6,3.6l-3.6,3.6l-3.6,-3.6zM763.8,287.8l3.6,3.6l-3.6,3.6l-3.6,-3.6zM770.0,287.8l3.6,3.6l-3.6,3.6l-3.6,-3.6zM776.2,287.8l3.6,3.6l-3.6,3.6l-3.6,-3.6zM782.4,287.8l3.6,3.6l-3.6,3.6l-3.6,-3.6zM788.6,287.8l3.6,3.6l-3.6,3.6l-3.6,-3.6zM794.9,287.8l3.6,3.6l-3.6,3.6l-3.6,-3.6zM801.1,287.8l3.6,3.6l-3.6,3.6l-3.6,-3.6zM807.3,287.8l3.6,3.6l-3.6,3.6l-3.6,-3.6zM813.5,287.8l3.6,3.6l-3.6,3.6l-3.6,-3.6zM819.7,287.8l3.6,3.6l-3.6,3.6l-3.6,-3.6zM826.0,287.8l3.6,3.6l-3.6,3.6l-3.6,-3.6zM832.2,287.8l3.6,3.6l-3.6,3.6l-3.6,-3.6zM838.4,287.8l3.6,3.6l-3.6,3.6l-3.6,-3.6zM844.6,287.8l3.6,3.6l-3.6,3.6l-3.6,-3.6zM850.8,287.8l3.6,3.6l-3.6,3.6l-3.6,-3.6zM857.1,287.8l3.6,3.6l-3.6,3.6l-3.6,-3.6zM863.3,287.8l3.6,3.6l-3.6,3.6l-3.6,-3.6zM869.5,287.8l3.6,3.6l-3.6,3.6l-3.6,-3.6zM875.7,287.8l3.6,3.6l-3.6,3.6l-3.6,-3.6zM881.9,287.8l3.6,3.6l-3.6,3.6l-3.6,-3.6zM888.1,287.8l3.6,3.6l-3.6,3.6l-3.6,-3.6zM894.4,287.8l3.6,3.6l-3.6,3.6l-3.6,-3.6zM900.6,287.8l3.6,3.6l-3.6,3.6l-3.6,-3.6zM906.8,287.8l3.6,3.6l-3.6,3.6l-3.6,-3.6zM913.0,287.8l3.6,3.6l-3.6,3.6l-3.6,-3.6zM919.2,287.8l3.6,3.6l-3.6,3.6l-3.6,-3.6zM925.5,287.8l3.6,3.6l-3.6,3.6l-3.6,-3.6zM931.7,287.8l3.6,3.6l-3.6,3.6l-3.6,-3.6zM937.9,287.8l3.6,3.6l-3.6,3.6l-3.6,-3.6zM944.1,287.8l3.6,3.6l-3.6,3.6l-3.6,-3.6zM950.3,287.8l3.6,3.6l-3.6,3.6l-3.6,-3.6zM956.6,287.8l3.6,3.6l-3.6,3.6l-3.6,-3.6zM962.8,287.8l3.6,3.6l-3.6,3.6l-3.6,-3.6zM969.0,287.8l3.6,3.6l-3.6,3.6l-3.6,-3.6zM975.2,287.8l3.6,3.6l-3.6,3.6l-3.6,-3.6zM981.4,287.8l3.6,3.6l-3.6,3.6l-3.6,-3.6zM987.6,287.8l3.6,3.6l-3.6,3.6l-3.6,-3.6zM993.9,287.8l3.6,3.6l-3.6,3.6l-3.6,-3.6zM1000.1,287.8l3.6,3.6l-3.6,3.6l-3.6,-3.6zM1006.3,287.8l3.6,3.6l-3.6,3.6l-3.6,-3.6zM1012.5,287.8l3.6,3.6l-3.6,3.6l-3.6,-3.6zM1018.7,287.8l3.6,3.6l-3.6,3.6l-3.6,-3.6zM1025.0,287.8l3.6,3.6l-3.6,3.6l-3.6,-3.6zM1031.2,287.8l3.6,3.6l-3.6,3.6l-3.6,-3.6zM1037.4,287.8l3.6,3.6l-3.6,3.6l-3.6,-3.6zM1043.6,287.8l3.6,3.6l-3.6,3.6l-3.6,-3.6zM1049.8,287.8l3.6,3.6l-3.6,3.6l-3.6,-3.6zM1056.0,287.8l3.6,3.6l-3.6,3.6l-3.6,-3.6zM1062.3,287.8l3.6,3.6l-3.6,3.6l-3.6,-3.6zM1068.5,175.8l3.6,3.6l-3.6,3.6l-3.6,-3.6zM1074.7,175.8l3.6,3.6l-3.6,3.6l-3.6,-3.6zM1080.9,175.8l3.6,3.6l-3.6,3.6l-3.6,-3.6zM1087.1,175.8l3.6,3.6l-3.6,3.6l-3.6,-3.6zM1093.4,175.8l3.6,3.6l-3.6,3.6l-3.6,-3.6zM1099.6,175.8l3.6,3.6l-3.6,3.6l-3.6,-3.6zM1105.8,175.8l3.6,3.6l-3.6,3.6l-3.6,-3.6zM1112.0,175.8l3.6,3.6l-3.6,3.6l-3.6,-3.6zM1118.2,175.8l3.6,3.6l-3.6,3.6l-3.6,-3.6zM1124.5,175.8l3.6,3.6l-3.6,3.6l-3.6,-3.6zM1130.7,175.8l3.6,3.6l-3.6,3.6l-3.6,-3.6zM1136.9,175.8l3.6,3.6l-3.6,3.6l-3.6,-3.6zM1143.1,287.8l3.6,3.6l-3.6,3.6l-3.6,-3.6zM1149.3,287.8l3.6,3.6l-3.6,3.6l-3.6,-3.6zM1155.5,287.8l3.6,3.6l-3.6,3.6l-3.6,-3.6zM1161.8,287.8l3.6,3.6l-3.6,3.6l-3.6,-3.6zM1168.0,287.8l3.6,3.6l-3.6,3.6l-3.6,-3.6zM1174.2,287.8l3.6,3.6l-3.6,3.6l-3.6,-3.6zM1180.4,287.8l3.6,3.6l-3.6,3.6l-3.6,-3.6zM1186.6,287.8l3.6,3.6l-3.6,3.6l-3.6,-3.6zM1192.9,287.8l3.6,3.6l-3.6,3.6l-3.6,-3.6zM1199.1,287.8l3.6,3.6l-3.6,3.6l-3.6,-3.6zM1205.3,287.8l3.6,3.6l-3.6,3.6l-3.6,-3.6zM1211.5,287.8l3.6,3.6l-3.6,3.6l-3.6,-3.6zM1217.7,175.8l3.6,3.6l-3.6,3.6l-3.6,-3.6zM1223.9,175.8l3.6,3.6l-3.6,3.6l-3.6,-3.6zM1230.2,175.8l3.6,3.6l-3.6,3.6l-3.6,-3.6zM1236.4,175.8l3.6,3.6l-3.6,3.6l-3.6,-3.6zM1242.6,175.8l3.6,3.6l-3.6,3.6l-3.6,-3.6zM1248.8,175.8l3.6,3.6l-3.6,3.6l-3.6,-3.6zM1255.0,175.8l3.6,3.6l-3.6,3.6l-3.6,-3.6zM1261.3,175.8l3.6,3.6l-3.6,3.6l-3.6,-3.6zM1267.5,175.8l3.6,3.6l-3.6,3.6l-3.6,-3.6zM1273.7,175.8l3.6,3.6l-3.6,3.6l-3.6,-3.6zM1279.9,175.8l3.6,3.6l-3.6,3.6l-3.6,-3.6zM1286.1,175.8l3.6,3.6l-3.6,3.6l-3.6,-3.6zM1292.4,287.8l3.6,3.6l-3.6,3.6l-3.6,-3.6zM1298.6,287.8l3.6,3.6l-3.6,3.6l-3.6,-3.6zM1304.8,287.8l3.6,3.6l-3.6,3.6l-3.6,-3.6zM1311.0,287.8l3.6,3.6l-3.6,3.6l-3.6,-3.6zM1317.2,287.8l3.6,3.6l-3.6,3.6l-3.6,-3.6zM1323.4,287.8l3.6,3.6l-3.6,3.6l-3.6,-3.6zM1329.7,287.8l3.6,3.6l-3.6,3.6l-3.6,-3.6zM1335.9,287.8l3.6,3.6l-3.6,3.6l-3.6,-3.6zM1342.1,287.8l3.6,3.6l-3.6,3.6l-3.6,-3.6zM1348.3,287.8l3.6,3.6l-3.6,3.6l-3.6,-3.6zM1354.5,287.8l3.6,3.6l-3.6,3.6l-3.6,-3.6zM1360.8,287.8l3.6,3.6l-3.6,3.6l-3.6,-3.6zM1367.0,175.8l3.6,3.6l-3.6,3.6l-3.6,-3.6zM1373.2,175.8l3.6,3.6l-3.6,3.6l-3.6,-3.6zM1379.4,175.8l3.6,3.6l-3.6,3.6l-3.6,-3.6zM1385.6,175.8l3.6,3.6l-3.6,3.6l-3.6,-3.6zM1391.9,175.8l3.6,3.6l-3.6,3.6l-3.6,-3.6zM1398.1,175.8l3.6,3.6l-3.6,3.6l-3.6,-3.6zM1404.3,175.8l3.6,3.6l-3.6,3.6l-3.6,-3.6zM1410.5,175.8l3.6,3.6l-3.6,3.6l-3.6,-3.6zM1416.7,175.8l3.6,3.6l-3.6,3.6l-3.6,-3.6zM1422.9,175.8l3.6,3.6l-3.6,3.6l-3.6,-3.6zM1429.2,175.8l3.6,3.6l-3.6,3.6l-3.6,-3.6zM1435.4,175.8l3.6,3.6l-3.6,3.6l-3.6,-3.6zM1441.6,287.8l3.6,3.6l-3.6,3.6l-3.6,-3.6zM1447.8,287.8l3.6,3.6l-3.6,3.6l-3.6,-3.6zM1454.0,287.8l3.6,3.6l-3.6,3.6l-3.6,-3.6zM1460.3,287.8l3.6,3.6l-3.6,3.6l-3.6,-3.6zM1466.5,287.8l3.6,3.6l-3.6,3.6l-3.6,-3.6zM1472.7,287.8l3.6,3.6l-3.6,3.6l-3.6,-3.6zM1478.9,287.8l3.6,3.6l-3.6,3.6l-3.6,-3.6zM1485.1,287.8l3.6,3.6l-3.6,3.6l-3.6,-3.6zM1491.3,287.8l3.6,3.6l-3.6,3.6l-3.6,-3.6zM1497.6,287.8l3.6,3.6l-3.6,3.6l-3.6,-3.6zM1503.8,287.8l3.6,3.6l-3.6,3.6l-3.6,-3.6zM1510.0,287.8l3.6,3.6l-3.6,3.6l-3.6,-3.6zM1516.2,175.8l3.6,3.6l-3.6,3.6l-3.6,-3.6zM1522.4,175.8l3.6,3.6l-3.6,3.6l-3.6,-3.6zM1528.7,175.8l3.6,3.6l-3.6,3.6l-3.6,-3.6zM1534.9,175.8l3.6,3.6l-3.6,3.6l-3.6,-3.6zM1541.1,175.8l3.6,3.6l-3.6,3.6l-3.6,-3.6zM1547.3,175.8l3.6,3.6l-3.6,3.6l-3.6,-3.6zM1553.5,175.8l3.6,3.6l-3.6,3.6l-3.6,-3.6zM1559.8,175.8l3.6,3.6l-3.6,3.6l-3.6,-3.6zM1566.0,175.8l3.6,3.6l-3.6,3.6l-3.6,-3.6zM1572.2,175.8l3.6,3.6l-3.6,3.6l-3.6,-3.6zM1578.4,175.8l3.6,3.6l-3.6,3.6l-3.6,-3.6zM1584.6,175.8l3.6,3.6l-3.6,3.6l-3.6,-3.6zM1590.8,287.8l3.6,3.6l-3.6,3.6l-3.6,-3.6zM1597.1,287.8l3.6,3.6l-3.6,3.6l-3.6,-3.6zM1603.3,287.8l3.6,3.6l-3.6,3.6l-3.6,-3.6zM1609.5,287.8l3.6,3.6l-3.6,3.6l-3.6,-3.6z" fill="#dede26"/>
 <path d="M571.0,329.0l3.6,3.6l-3.6,3.6l-3.6,-3.6zM577.2,326.9l3.6,3.6l-3.6,3.6l-3.6,-3.6zM583.4,323.1l3.6,3.6l-3.6,3.6l-3.6,-3.6zM589.7,324.1l3.6,3.6l-3.6,3.6l-3.6,-3.6zM595.9,325.9l3.6,3.6l-3.6,3.6l-3.6,-3.6zM602.1,325.8l3.6,3.6l-3.6,3.6l-3.6,-3.6zM608.3,323.6l3.6,3.6l-3.6,3.6l-3.6,-3.6zM614.5,310.2l3.6,3.6l-3.6,3.6l-3.6,-3.6zM620.7,425.6l3.6,3.6l-3.6,3.6l-3.6,-3.6zM627.0,417.7l3.6,3.6l-3.6,3.6l-3.6,-3.6zM633.2,399.8l3.6,3.6l-3.6,3.6l-3.6,-3.6zM639.4,379.6l3.6,3.6l-3.6,3.6l-3.6,-3.6zM645.6,368.4l3.6,3.6l-3.6,3.6l-3.6,-3.6zM651.8,365.1l3.6,3.6l-3.6,3.6l-3.6,-3.6zM658.1,371.8l3.6,3.6l-3.6,3.6l-3.6,-3.6zM664.3,383.0l3.6,3.6l-3.6,3.6l-3.6,-3.6zM670.5,400.9l3.6,3.6l-3.6,3.6l-3.6,-3.6zM676.7,412.1l3.6,3.6l-3.6,3.6l-3.6,-3.6zM682.9,417.7l3.6,3.6l-3.6,3.6l-3.6,-3.6zM689.2,418.8l3.6,3.6l-3.6,3.6l-3.6,-3.6zM695.4,327.0l3.6,3.6l-3.6,3.6l-3.6,-3.6zM701.6,330.4l3.6,3.6l-3.6,3.6l-3.6,-3.6zM707.8,323.6l3.6,3.6l-3.6,3.6l-3.6,-3.6zM714.0,325.3l3.6,3.6l-3.6,3.6l-3.6,-3.6zM720.2,338.2l3.6,3.6l-3.6,3.6l-3.6,-3.6zM726.5,334.8l3.6,3.6l-3.6,3.6l-3.6,-3.6zM732.7,333.7l3.6,3.6l-3.6,3.6l-3.6,-3.6zM738.9,337.1l3.6,3.6l-3.6,3.6l-3.6,-3.6zM745.1,336.0l3.6,3.6l-3.6,3.6l-3.6,-3.6zM751.3,334.8l3.6,3.6l-3.6,3.6l-3.6,-3.6zM757.6,334.8l3.6,3.6l-3.6,3.6l-3.6,-3.6zM763.8,327.0l3.6,3.6l-3.6,3.6l-3.6,-3.6zM770.0,324.8l3.6,3.6l-3.6,3.6l-3.6,-3.6zM776.2,319.2l3.6,3.6l-3.6,3.6l-3.6,-3.6zM782.4,305.7l3.6,3.6l-3.6,3.6l-3.6,-3.6zM788.6,295.6l3.6,3.6l-3.6,3.6l-3.6,-3.6zM794.9,283.3l3.6,3.6l-3.6,3.6l-3.6,-3.6zM801.1,284.4l3.6,3.6l-3.6,3.6l-3.6,-3.6zM807.3,287.8l3.6,3.6l-3.6,3.6l-3.6,-3.6zM813.5,299.0l3.6,3.6l-3.6,3.6l-3.6,-3.6zM819.7,308.0l3.6,3.6l-3.6,3.6l-3.6,-3.6zM826.0,314.7l3.6,3.6l-3.6,3.6l-3.6,-3.6zM832.2,330.9l3.6,3.6l-3.6,3.6l-3.6,-3.6zM838.4,323.6l3.6,3.6l-3.6,3.6l-3.6,-3.6zM844.6,332.6l3.6,3.6l-3.6,3.6l-3.6,-3.6zM850.8,336.0l3.6,3.6l-3.6,3.6l-3.6,-3.6zM857.1,337.1l3.6,3.6l-3.6,3.6l-3.6,-3.6zM863.3,334.8l3.6,3.6l-3.6,3.6l-3.6,-3.6zM869.5,334.8l3.6,3.6l-3.6,3.6l-3.6,-3.6zM875.7,333.7l3.6,3.6l-3.6,3.6l-3.6,-3.6zM881.9,334.3l3.6,3.6l-3.6,3.6l-3.6,-3.6zM888.1,334.8l3.6,3.6l-3.6,3.6l-3.6,-3.6zM894.4,334.8l3.6,3.6l-3.6,3.6l-3.6,-3.6zM900.6,337.1l3.6,3.6l-3.6,3.6l-3.6,-3.6zM906.8,334.8l3.6,3.6l-3.6,3.6l-3.6,-3.6zM913.0,325.3l3.6,3.6l-3.6,3.6l-3.6,-3.6zM919.2,323.6l3.6,3.6l-3.6,3.6l-3.6,-3.6zM925.5,318.0l3.6,3.6l-3.6,3.6l-3.6,-3.6zM931.7,309.1l3.6,3.6l-3.6,3.6l-3.6,-3.6zM937.9,300.7l3.6,3.6l-3.6,3.6l-3.6,-3.6zM944.1,287.8l3.6,3.6l-3.6,3.6l-3.6,-3.6zM950.3,281.1l3.6,3.6l-3.6,3.6l-3.6,-3.6zM956.6,284.9l3.6,3.6l-3.6,3.6l-3.6,-3.6zM962.8,299.0l3.6,3.6l-3.6,3.6l-3.6,-3.6zM969.0,309.1l3.6,3.6l-3.6,3.6l-3.6,-3.6zM975.2,316.9l3.6,3.6l-3.6,3.6l-3.6,-3.6zM981.4,326.3l3.6,3.6l-3.6,3.6l-3.6,-3.6zM987.6,333.7l3.6,3.6l-3.6,3.6l-3.6,-3.6zM993.9,337.1l3.6,3.6l-3.6,3.6l-3.6,-3.6zM1000.1,334.8l3.6,3.6l-3.6,3.6l-3.6,-3.6zM1006.3,332.6l3.6,3.6l-3.6,3.6l-3.6,-3.6zM1012.5,337.1l3.6,3.6l-3.6,3.6l-3.6,-3.6zM1018.7,334.8l3.6,3.6l-3.6,3.6l-3.6,-3.6zM1025.0,333.7l3.6,3.6l-3.6,3.6l-3.6,-3.6zM1031.2,332.6l3.6,3.6l-3.6,3.6l-3.6,-3.6zM1037.4,334.8l3.6,3.6l-3.6,3.6l-3.6,-3.6zM1043.6,334.8l3.6,3.6l-3.6,3.6l-3.6,-3.6zM1049.8,337.1l3.6,3.6l-3.6,3.6l-3.6,-3.6zM1056.0,333.7l3.6,3.6l-3.6,3.6l-3.6,-3.6zM1062.3,326.3l3.6,3.6l-3.6,3.6l-3.6,-3.6zM1068.5,434.5l3.6,3.6l-3.6,3.6l-3.6,-3.6zM1074.7,428.9l3.6,3.6l-3.6,3.6l-3.6,-3.6zM1080.9,417.7l3.6,3.6l-3.6,3.6l-3.6,-3.6zM1087.1,411.0l3.6,3.6l-3.6,3.6l-3.6,-3.6zM1093.4,406.5l3.6,3.6l-3.6,3.6l-3.6,-3.6zM1099.6,393.1l3.6,3.6l-3.6,3.6l-3.6,-3.6zM1105.8,404.3l3.6,3.6l-3.6,3.6l-3.6,-3.6zM1112.0,409.9l3.6,3.6l-3.6,3.6l-3.6,-3.6zM1118.2,421.1l3.6,3.6l-3.6,3.6l-3.6,-3.6zM1124.5,425.6l3.6,3.6l-3.6,3.6l-3.6,-3.6zM1130.7,435.6l3.6,3.6l-3.6,3.6l-3.6,-3.6zM1136.9,439.0l3.6,3.6l-3.6,3.6l-3.6,-3.6zM1143.1,334.8l3.6,3.6l-3.6,3.6l-3.6,-3.6zM1149.3,333.7l3.6,3.6l-3.6,3.6l-3.6,-3.6zM1155.5,334.8l3.6,3.6l-3.6,3.6l-3.6,-3.6zM1161.8,338.2l3.6,3.6l-3.6,3.6l-3.6,-3.6zM1168.0,338.2l3.6,3.6l-3.6,3.6l-3.6,-3.6zM1174.2,332.6l3.6,3.6l-3.6,3.6l-3.6,-3.6zM1180.4,332.6l3.6,3.6l-3.6,3.6l-3.6,-3.6zM1186.6,333.7l3.6,3.6l-3.6,3.6l-3.6,-3.6zM1192.9,333.7l3.6,3.6l-3.6,3.6l-3.6,-3.6zM1199.1,337.1l3.6,3.6l-3.6,3.6l-3.6,-3.6zM1205.3,333.7l3.6,3.6l-3.6,3.6l-3.6,-3.6zM1211.5,324.3l3.6,3.6l-3.6,3.6l-3.6,-3.6zM1217.7,434.5l3.6,3.6l-3.6,3.6l-3.6,-3.6zM1223.9,434.5l3.6,3.6l-3.6,3.6l-3.6,-3.6zM1230.2,418.8l3.6,3.6l-3.6,3.6l-3.6,-3.6zM1236.4,407.6l3.6,3.6l-3.6,3.6l-3.6,-3.6zM1242.6,399.8l3.6,3.6l-3.6,3.6l-3.6,-3.6zM1248.8,404.3l3.6,3.6l-3.6,3.6l-3.6,-3.6zM1255.0,399.8l3.6,3.6l-3.6,3.6l-3.6,-3.6zM1261.3,408.8l3.6,3.6l-3.6,3.6l-3.6,-3.6zM1267.5,418.8l3.6,3.6l-3.6,3.6l-3.6,-3.6zM1273.7,422.2l3.6,3.6l-3.6,3.6l-3.6,-3.6zM1279.9,435.6l3.6,3.6l-3.6,3.6l-3.6,-3.6zM1286.1,437.9l3.6,3.6l-3.6,3.6l-3.6,-3.6zM1292.4,336.0l3.6,3.6l-3.6,3.6l-3.6,-3.6zM1298.6,334.3l3.6,3.6l-3.6,3.6l-3.6,-3.6zM1304.8,334.8l3.6,3.6l-3.6,3.6l-3.6,-3.6zM1311.0,337.1l3.6,3.6l-3.6,3.6l-3.6,-3.6zM1317.2,334.8l3.6,3.6l-3.6,3.6l-3.6,-3.6zM1323.4,337.1l3.6,3.6l-3.6,3.6l-3.6,-3.6zM1329.7,336.0l3.6,3.6l-3.6,3.6l-3.6,-3.6zM1335.9,338.2l3.6,3.6l-3.6,3.6l-3.6,-3.6zM1342.1,336.0l3.6,3.6l-3.6,3.6l-3.6,-3.6zM1348.3,334.8l3.6,3.6l-3.6,3.6l-3.6,-3.6zM1354.5,339.3l3.6,3.6l-3.6,3.6l-3.6,-3.6zM1360.8,319.2l3.6,3.6l-3.6,3.6l-3.6,-3.6zM1367.0,437.9l3.6,3.6l-3.6,3.6l-3.6,-3.6zM1373.2,431.2l3.6,3.6l-3.6,3.6l-3.6,-3.6zM1379.4,415.5l3.6,3.6l-3.6,3.6l-3.6,-3.6zM1385.6,411.0l3.6,3.6l-3.6,3.6l-3.6,-3.6zM1391.9,397.6l3.6,3.6l-3.6,3.6l-3.6,-3.6zM1398.1,395.3l3.6,3.6l-3.6,3.6l-3.6,-3.6zM1404.3,397.6l3.6,3.6l-3.6,3.6l-3.6,-3.6zM1410.5,406.5l3.6,3.6l-3.6,3.6l-3.6,-3.6zM1416.7,424.4l3.6,3.6l-3.6,3.6l-3.6,-3.6zM1422.9,424.4l3.6,3.6l-3.6,3.6l-3.6,-3.6zM1429.2,437.9l3.6,3.6l-3.6,3.6l-3.6,-3.6zM1435.4,433.4l3.6,3.6l-3.6,3.6l-3.6,-3.6zM1441.6,334.3l3.6,3.6l-3.6,3.6l-3.6,-3.6zM1447.8,337.1l3.6,3.6l-3.6,3.6l-3.6,-3.6zM1454.0,334.8l3.6,3.6l-3.6,3.6l-3.6,-3.6zM1460.3,333.7l3.6,3.6l-3.6,3.6l-3.6,-3.6zM1466.5,331.9l3.6,3.6l-3.6,3.6l-3.6,-3.6zM1472.7,336.0l3.6,3.6l-3.6,3.6l-3.6,-3.6zM1478.9,334.8l3.6,3.6l-3.6,3.6l-3.6,-3.6zM1485.1,338.2l3.6,3.6l-3.6,3.6l-3.6,-3.6zM1491.3,333.7l3.6,3.6l-3.6,3.6l-3.6,-3.6zM1497.6,336.0l3.6,3.6l-3.6,3.6l-3.6,-3.6zM1503.8,333.7l3.6,3.6l-3.6,3.6l-3.6,-3.6zM1510.0,318.0l3.6,3.6l-3.6,3.6l-3.6,-3.6zM1516.2,440.1l3.6,3.6l-3.6,3.6l-3.6,-3.6zM1522.4,431.2l3.6,3.6l-3.6,3.6l-3.6,-3.6zM1528.7,422.2l3.6,3.6l-3.6,3.6l-3.6,-3.6zM1534.9,405.4l3.6,3.6l-3.6,3.6l-3.6,-3.6zM1541.1,397.6l3.6,3.6l-3.6,3.6l-3.6,-3.6zM1547.3,394.2l3.6,3.6l-3.6,3.6l-3.6,-3.6zM1553.5,397.6l3.6,3.6l-3.6,3.6l-3.6,-3.6zM1559.8,411.0l3.6,3.6l-3.6,3.6l-3.6,-3.6zM1566.0,427.8l3.6,3.6l-3.6,3.6l-3.6,-3.6zM1572.2,428.9l3.6,3.6l-3.6,3.6l-3.6,-3.6zM1578.4,432.3l3.6,3.6l-3.6,3.6l-3.6,-3.6zM1584.6,440.1l3.6,3.6l-3.6,3.6l-3.6,-3.6zM1590.8,334.8l3.6,3.6l-3.6,3.6l-3.6,-3.6zM1597.1,334.3l3.6,3.6l-3.6,3.6l-3.6,-3.6zM1603.3,333.7l3.6,3.6l-3.6,3.6l-3.6,-3.6zM1609.5,333.7l3.6,3.6l-3.6,3.6l-3.6,-3.6z" fill="#f0ea7a"/>
 <!-- slider -->
 <rect x="572" y="532" width="1037" height="4" fill="#4d4b4a"/>
 <circle cx="572.3" cy="534" r="7.2" fill="#fff" stroke="#4f4a48" stroke-width="1.5"/>
 <circle cx="1609.5" cy="534" r="7.2" fill="#fff" stroke="#4f4a48" stroke-width="1.5"/>
 <text x="1091" y="561.9" font-family="Liberation Sans" font-size="17.6" fill="#8aab3a" text-anchor="middle">Delivery Start (CET)</text>
 <!-- legend -->
 <g font-family="Liberation Sans" font-size="14.67" fill="#d9d9d9">
  <line x1="496.3" x2="532" y1="136.6" y2="136.6" stroke="#1a5f96" stroke-width="2.5"/>
  <path d="M515.4,131.6l5,5l-5,5l-5,-5z" fill="#1a5f96"/>
  <text x="535" y="141.2" stroke="#d9d9d9" stroke-width="0.2">Demand Forecast</text>
  <line x1="655.8" x2="691.7" y1="136.6" y2="136.6" stroke="#dede26" stroke-width="2.5"/>
  <path d="M675.2,131.6l5,5l-5,5l-5,-5z" fill="#dede26"/>
  <text x="694.5" y="141.2" stroke="#d9d9d9" stroke-width="0.2">Hedged Position</text>
  <line x1="807.2" x2="842.8" y1="136.6" y2="136.6" stroke="#f0ea7a" stroke-width="2.5"/>
  <path d="M826.3,131.6l5,5l-5,5l-5,-5z" fill="#f0ea7a"/>
  <text x="845.4" y="141.2" stroke="#d9d9d9" stroke-width="0.2">Open Position</text>
 </g>
 <text x="497.4" y="109.9" font-family="Liberation Sans" font-size="20.5" fill="#e8e67a" stroke="#e8e67a" stroke-width="0.2">Demand Forecast vs Hedged and Open Position</text>
</svg>

<!-- OPEN POSITION VISUAL -->
<div class="a" style="left:228px;top:569px;width:537px;height:314px;background:#214456"></div>
<div class="a" style="left:234px;top:570px;font-size:20.5px;line-height:24px;color:#e8e67a;white-space:nowrap">Open Position (MWh)</div>
<div class="a" style="left:405px;top:598px;width:1px;height:62px;background:#2a4f60"></div>
<div class="a" style="left:532.5px;top:598px;width:1px;height:62px;background:#2a4f60"></div>
<div class="a" style="left:629px;top:598px;width:1px;height:62px;background:#2a4f60"></div>
<div class="hh" style="left:239.3px;top:599px">Delivery Start</div>
<div class="hh" style="left:412px;top:599px">Demand<br>Forecast (MWh)</div>
<div class="hh" style="left:540px;top:599px">Hedged<br>Position<br>(MWh)</div>
<div class="hh" style="left:636px;top:599px">OpenPosition<br>(MWh)</div>
<div class="a" style="left:0;top:0;width:1838px;height:915px;clip-path:inset(660.7px 1106.1px 57.9px 233.2px)">
 <div class="a" style="left:233.2px;top:660px;width:498.7px;height:1.5px;background:#2d6f9c"></div>
 <div class="r" style="left:233.2px;width:498.7px;top:661.8px;height:36.3px;background:#427e8b"></div><svg class="a" style="left:240px;top:665.1px;opacity:.85" width="10" height="10"><rect x="0.65" y="0.65" width="8.6" height="8.8" rx="1.8" fill="none" stroke="#c3ccd0" stroke-width="1.3"/><path d="M2.6,5H7 M4.8,2.8V7.2" stroke="#c3ccd0" stroke-width="1.4" fill="none"/></svg><div class="bt" style="left:259px;top:663.4px">2/28/2025 12:00:00<br>AM</div><div class="bt num" style="right:1310.6px;top:663.4px">33.19</div><div class="bt num" style="right:1214.0px;top:663.4px">35.00</div><div class="bt num" style="right:1111.6px;top:663.4px">-1.81</div><div class="r" style="left:233.2px;width:498.7px;top:698.1px;height:36.3px;background:#7b9d34"></div><svg class="a" style="left:240px;top:701.4px;opacity:.85" width="10" height="10"><rect x="0.65" y="0.65" width="8.6" height="8.8" rx="1.8" fill="none" stroke="#c3ccd0" stroke-width="1.3"/><path d="M2.6,5H7 M4.8,2.8V7.2" stroke="#c3ccd0" stroke-width="1.4" fill="none"/></svg><div class="bt" style="left:259px;top:699.7px">2/28/2025 1:00:00<br>AM</div><div class="bt num" style="right:1310.6px;top:699.7px">35.08</div><div class="bt num" style="right:1214.0px;top:699.7px">35.00</div><div class="bt num" style="right:1111.6px;top:699.7px">0.08</div><div class="r" style="left:233.2px;width:498.7px;top:734.4px;height:36.3px;background:#427e8b"></div><svg class="a" style="left:240px;top:737.7px;opacity:.85" width="10" height="10"><rect x="0.65" y="0.65" width="8.6" height="8.8" rx="1.8" fill="none" stroke="#c3ccd0" stroke-width="1.3"/><path d="M2.6,5H7 M4.8,2.8V7.2" stroke="#c3ccd0" stroke-width="1.4" fill="none"/></svg><div class="bt" style="left:259px;top:736.0px">2/28/2025 2:00:00<br>AM</div><div class="bt num" style="right:1310.6px;top:736.0px">38.46</div><div class="bt num" style="right:1214.0px;top:736.0px">35.00</div><div class="bt num" style="right:1111.6px;top:736.0px">3.46</div><div class="r" style="left:233.2px;width:498.7px;top:770.7px;height:36.3px;background:#7b9d34"></div><svg class="a" style="left:240px;top:774.0px;opacity:.85" width="10" height="10"><rect x="0.65" y="0.65" width="8.6" height="8.8" rx="1.8" fill="none" stroke="#c3ccd0" stroke-width="1.3"/><path d="M2.6,5H7 M4.8,2.8V7.2" stroke="#c3ccd0" stroke-width="1.4" fill="none"/></svg><div class="bt" style="left:259px;top:772.3px">2/28/2025 3:00:00<br>AM</div><div class="bt num" style="right:1310.6px;top:772.3px">37.61</div><div class="bt num" style="right:1214.0px;top:772.3px">35.00</div><div class="bt num" style="right:1111.6px;top:772.3px">2.61</div><div class="r" style="left:233.2px;width:498.7px;top:807.0px;height:36.3px;background:#427e8b"></div><svg class="a" style="left:240px;top:810.3px;opacity:.85" width="10" height="10"><rect x="0.65" y="0.65" width="8.6" height="8.8" rx="1.8" fill="none" stroke="#c3ccd0" stroke-width="1.3"/><path d="M2.6,5H7 M4.8,2.8V7.2" stroke="#c3ccd0" stroke-width="1.4" fill="none"/></svg><div class="bt" style="left:259px;top:808.6px">2/28/2025 4:00:00<br>AM</div><div class="bt num" style="right:1310.6px;top:808.6px">35.98</div><div class="bt num" style="right:1214.0px;top:808.6px">35.00</div><div class="bt num" style="right:1111.6px;top:808.6px">0.98</div><div class="r" style="left:233.2px;width:498.7px;top:843.3px;height:36.3px;background:#7b9d34"></div><svg class="a" style="left:240px;top:846.6px;opacity:.85" width="10" height="10"><rect x="0.65" y="0.65" width="8.6" height="8.8" rx="1.8" fill="none" stroke="#c3ccd0" stroke-width="1.3"/><path d="M2.6,5H7 M4.8,2.8V7.2" stroke="#c3ccd0" stroke-width="1.4" fill="none"/></svg><div class="bt" style="left:259px;top:844.9px">2/28/2025 5:00:00<br>AM</div><div class="bt num" style="right:1310.6px;top:844.9px">36.09</div><div class="bt num" style="right:1214.0px;top:844.9px">35.00</div><div class="bt num" style="right:1111.6px;top:844.9px">1.09</div>
 <div class="a" style="left:405px;top:660px;width:1px;height:200px;border-left:1px dotted #2f7ab5"></div>
 <div class="a" style="left:532.5px;top:660px;width:1px;height:200px;background:#2e4856"></div>
 <div class="a" style="left:629px;top:660px;width:1px;height:200px;background:#2e4856"></div>
</div>
<!-- total -->
<div class="a" style="left:233.2px;top:857.1px;width:498.7px;height:19.8px;background:#427e8b"></div>
<div class="a" style="left:405px;top:857.1px;width:1px;height:19.8px;border-left:1px dotted #2f7ab5"></div>
<div class="a" style="left:532.5px;top:857.1px;width:1px;height:19.8px;background:#2e4856"></div>
<div class="a" style="left:629px;top:857.1px;width:1px;height:19.8px;background:#2e4856"></div>
<div class="t b" style="left:260.3px;top:858.7px">Total</div>
<div class="t b num yl" style="right:1310.4px;top:858.7px">7,088.44</div>
<div class="t b num yl" style="right:1214px;top:858.7px">11,880.00</div>
<div class="t b num yl" style="right:1112.1px;top:858.7px">-4,791.56</div>
<!-- scrollbar -->
<div class="a" style="left:749.2px;top:598.5px;width:9.6px;height:278.4px;background:#92a3aa;border-radius:5px"></div>
<div class="a" style="left:750.2px;top:599.5px;width:7.6px;height:13px;background:#3f5158;border-radius:4px"></div>
<div class="a" style="left:228px;top:877px;width:537px;height:6px;background:#214456"></div>

<!-- HEDGE VISUAL -->
<div class="a" style="left:765px;top:570px;width:871px;height:313px;background:#214456"></div>
<div class="a" style="left:765px;top:570px;width:871px;height:4px;background:#2f4354"></div>
<div class="a" style="left:765px;top:877.6px;width:871px;height:5.4px;background:#2f4354"></div>
<div class="a" style="left:770.5px;top:573.5px;font-size:20.5px;line-height:24px;color:#e8e67a;white-space:nowrap">Daily Hedge Performance</div>

<svg class="a" style="left:1400px;top:570px" width="240" height="34">
 <g fill="none" stroke="#2a4b5c" stroke-width="1">
  <rect x="17.5" y="5.5" width="25.5" height="24"/><rect x="47.5" y="5.5" width="25.5" height="24"/>
  <rect x="78.5" y="5.5" width="25.5" height="24"/><rect x="108.5" y="5.5" width="25.5" height="24"/>
  <rect x="148.5" y="5.5" width="25.5" height="24"/><rect x="178.5" y="5.5" width="25.5" height="24"/>
  <rect x="209.5" y="5.5" width="24.5" height="24"/>
 </g>
 <g fill="none" stroke="#c8d0d4" stroke-width="1.5">
  <path d="M29.4,11 V24.8 M23.8,16.8 L29.4,11.2 L35,16.8"/>
  <path d="M60,11 V24.8 M54.4,19 L60,24.6 L65.6,19"/>
  <path d="M121.2,11 V17 M115,17 H127.3 M115,17 V24.5 M127.3,17 V24.5 M112,21.5 L115,24.5 L118,21.5 M124.3,21.5 L127.3,24.5 L130.3,21.5"/>
  <path d="M154,12.4 H167.8 M157.4,17 H164.5 M159.3,22.2 H162.7"/>
  <path d="M189.5,12 H184.3 V24.2 H197.5 V18.5 M190,18 L197,11 M192.5,11 H197.3 V15.8"/>
 </g>
 <g fill="none" stroke="#6a8591" stroke-width="1.5">
  <path d="M86,11 V24.8 M82,20.8 L86,24.8 L90,20.8 M95.5,11 V24.8 M91.5,20.8 L95.5,24.8 L99.5,20.8"/>
 </g>
 <g fill="#c8d0d4"><circle cx="216" cy="17.2" r="1.6"/><circle cx="221.5" cy="17.2" r="1.6"/><circle cx="227" cy="17.2" r="1.6"/></g>
</svg>
<div class="a" style="left:889px;top:603px;width:1px;height:45px;background:#2a4f60"></div>
<div class="a" style="left:1029px;top:603px;width:1px;height:45px;background:#2a4f60"></div>
<div class="a" style="left:1146px;top:603px;width:1px;height:45px;background:#2a4f60"></div>
<div class="a" style="left:1273px;top:603px;width:1px;height:45px;background:#2a4f60"></div>
<div class="a" style="left:1411px;top:603px;width:1px;height:45px;background:#2a4f60"></div>
<div class="a" style="left:1556px;top:603px;width:1px;height:45px;background:#2a4f60"></div>
<div class="a" style="left:0;top:0;width:1838px;height:915px;clip-path:inset(603px 217px 0 770px)">
 <div class="hh" style="left:776.2px;top:603.3px">Year</div>
 <div class="hh" style="left:895.9px;top:603.3px">Net Position (MWh)</div>
 <div class="hh" style="left:1035.5px;top:603.3px">Avg Trade Price<br>(EUR)</div>
 <div class="hh" style="left:1152.5px;top:603.3px">Avg Market Price<br>(EUR)</div>
 <div class="hh" style="left:1279.3px;top:603.3px">Trade Value (EUR)</div>
 <div class="hh" style="left:1418.3px;top:603.3px">Market Value (EUR)</div>
 <div class="hh" style="left:1562.8px;top:603.3px">MtM (EUR)</div>
</div>
<div class="a" style="left:0;top:0;width:1838px;height:915px;clip-path:inset(648.3px 217px 53px 770px)">
 <div class="r" style="left:770px;width:900px;top:644.85px;height:19.79px;background:#7b9d34"></div><svg class="a" style="left:788px;top:647.6px;opacity:.85" width="10" height="10"><rect x="0.65" y="0.65" width="8.6" height="8.8" rx="1.8" fill="none" stroke="#c3ccd0" stroke-width="1.3"/><path d="M2.6,5H7" stroke="#c3ccd0" stroke-width="1.4" fill="none"/></svg><div class="t b" style="left:806.5px;top:646.1px">January</div><div class="t num b" style="right:815.0px;top:646.1px">39,921.59</div><div class="t num b" style="right:697.9px;top:646.1px">63.53</div><div class="t num b" style="right:571.0px;top:646.1px">74.36</div><div class="t num b" style="right:433.1px;top:646.1px">1,625,339.91</div><div class="t num b" style="right:288.1px;top:646.1px">6,739,718.80</div><div class="t num b" style="right:176.3px;top:646.1px">5,114,378.89</div><div class="r" style="left:770px;width:900px;top:664.64px;height:19.79px;background:#427e8b"></div><svg class="a" style="left:799px;top:667.3px;opacity:.85" width="10" height="10"><rect x="0.65" y="0.65" width="8.6" height="8.8" rx="1.8" fill="none" stroke="#c3ccd0" stroke-width="1.3"/><path d="M2.6,5H7 M4.8,2.8V7.2" stroke="#c3ccd0" stroke-width="1.4" fill="none"/></svg><div class="t" style="left:817.5px;top:665.8px">1</div><div class="t num" style="right:815.0px;top:665.8px">1,298.03</div><div class="t num" style="right:697.9px;top:665.8px">43.58</div><div class="t num" style="right:571.0px;top:665.8px">0.37</div><div class="t num" style="right:433.1px;top:665.8px">141,449.94</div><div class="t num" style="right:288.1px;top:665.8px">921.85</div><div class="t num" style="right:176.3px;top:665.8px">-140,528.09</div><div class="r" style="left:770px;width:900px;top:684.43px;height:19.79px;background:#7b9d34"></div><svg class="a" style="left:799px;top:687.1px;opacity:.85" width="10" height="10"><rect x="0.65" y="0.65" width="8.6" height="8.8" rx="1.8" fill="none" stroke="#c3ccd0" stroke-width="1.3"/><path d="M2.6,5H7 M4.8,2.8V7.2" stroke="#c3ccd0" stroke-width="1.4" fill="none"/></svg><div class="t" style="left:817.5px;top:685.6px">2</div><div class="t num" style="right:815.0px;top:685.6px">1,272.96</div><div class="t num" style="right:697.9px;top:685.6px">60.30</div><div class="t num" style="right:571.0px;top:685.6px">69.26</div><div class="t num" style="right:433.1px;top:685.6px">39,386.38</div><div class="t num" style="right:288.1px;top:685.6px">234,124.05</div><div class="t num" style="right:176.3px;top:685.6px">194,737.67</div><div class="r" style="left:770px;width:900px;top:704.22px;height:19.79px;background:#427e8b"></div><svg class="a" style="left:799px;top:706.9px;opacity:.85" width="10" height="10"><rect x="0.65" y="0.65" width="8.6" height="8.8" rx="1.8" fill="none" stroke="#c3ccd0" stroke-width="1.3"/><path d="M2.6,5H7 M4.8,2.8V7.2" stroke="#c3ccd0" stroke-width="1.4" fill="none"/></svg><div class="t" style="left:817.5px;top:705.4px">3</div><div class="t num" style="right:815.0px;top:705.4px">1,285.94</div><div class="t num" style="right:697.9px;top:705.4px">59.76</div><div class="t num" style="right:571.0px;top:705.4px">57.15</div><div class="t num" style="right:433.1px;top:705.4px">71,444.55</div><div class="t num" style="right:288.1px;top:705.4px">183,093.30</div><div class="t num" style="right:176.3px;top:705.4px">111,648.75</div><div class="r" style="left:770px;width:900px;top:724.01px;height:19.79px;background:#7b9d34"></div><svg class="a" style="left:799px;top:726.7px;opacity:.85" width="10" height="10"><rect x="0.65" y="0.65" width="8.6" height="8.8" rx="1.8" fill="none" stroke="#c3ccd0" stroke-width="1.3"/><path d="M2.6,5H7 M4.8,2.8V7.2" stroke="#c3ccd0" stroke-width="1.4" fill="none"/></svg><div class="t" style="left:817.5px;top:725.2px">4</div><div class="t num" style="right:815.0px;top:725.2px">1,275.46</div><div class="t num" style="right:697.9px;top:725.2px">62.70</div><div class="t num" style="right:571.0px;top:725.2px">60.40</div><div class="t num" style="right:433.1px;top:725.2px">112,602.91</div><div class="t num" style="right:288.1px;top:725.2px">101,466.40</div><div class="t num" style="right:176.3px;top:725.2px">-11,136.51</div><div class="r" style="left:770px;width:900px;top:743.80px;height:19.79px;background:#427e8b"></div><svg class="a" style="left:799px;top:746.5px;opacity:.85" width="10" height="10"><rect x="0.65" y="0.65" width="8.6" height="8.8" rx="1.8" fill="none" stroke="#c3ccd0" stroke-width="1.3"/><path d="M2.6,5H7 M4.8,2.8V7.2" stroke="#c3ccd0" stroke-width="1.4" fill="none"/></svg><div class="t" style="left:817.5px;top:745.0px">5</div><div class="t num" style="right:815.0px;top:745.0px">1,280.71</div><div class="t num" style="right:697.9px;top:745.0px">50.56</div><div class="t num" style="right:571.0px;top:745.0px">36.12</div><div class="t num" style="right:433.1px;top:745.0px">86,777.29</div><div class="t num" style="right:288.1px;top:745.0px">60,679.50</div><div class="t num" style="right:176.3px;top:745.0px">-26,097.79</div><div class="r" style="left:770px;width:900px;top:763.59px;height:19.79px;background:#7b9d34"></div><svg class="a" style="left:799px;top:766.3px;opacity:.85" width="10" height="10"><rect x="0.65" y="0.65" width="8.6" height="8.8" rx="1.8" fill="none" stroke="#c3ccd0" stroke-width="1.3"/><path d="M2.6,5H7 M4.8,2.8V7.2" stroke="#c3ccd0" stroke-width="1.4" fill="none"/></svg><div class="t" style="left:817.5px;top:764.8px">6</div><div class="t num" style="right:815.0px;top:764.8px">1,274.71</div><div class="t num" style="right:697.9px;top:764.8px">47.98</div><div class="t num" style="right:571.0px;top:764.8px">17.69</div><div class="t num" style="right:433.1px;top:764.8px">117,061.95</div><div class="t num" style="right:288.1px;top:764.8px">58,728.55</div><div class="t num" style="right:176.3px;top:764.8px">-58,333.40</div><div class="r" style="left:770px;width:900px;top:783.38px;height:19.79px;background:#427e8b"></div><svg class="a" style="left:799px;top:786.1px;opacity:.85" width="10" height="10"><rect x="0.65" y="0.65" width="8.6" height="8.8" rx="1.8" fill="none" stroke="#c3ccd0" stroke-width="1.3"/><path d="M2.6,5H7 M4.8,2.8V7.2" stroke="#c3ccd0" stroke-width="1.4" fill="none"/></svg><div class="t" style="left:817.5px;top:784.6px">7</div><div class="t num" style="right:815.0px;top:784.6px">1,310.60</div><div class="t num" style="right:697.9px;top:784.6px">54.01</div><div class="t num" style="right:571.0px;top:784.6px">42.74</div><div class="t num" style="right:433.1px;top:784.6px">81,120.31</div><div class="t num" style="right:288.1px;top:784.6px">143,734.95</div><div class="t num" style="right:176.3px;top:784.6px">62,614.64</div><div class="r" style="left:770px;width:900px;top:803.17px;height:19.79px;background:#7b9d34"></div><svg class="a" style="left:799px;top:805.9px;opacity:.85" width="10" height="10"><rect x="0.65" y="0.65" width="8.6" height="8.8" rx="1.8" fill="none" stroke="#c3ccd0" stroke-width="1.3"/><path d="M2.6,5H7 M4.8,2.8V7.2" stroke="#c3ccd0" stroke-width="1.4" fill="none"/></svg><div class="t" style="left:817.5px;top:804.4px">8</div><div class="t num" style="right:815.0px;top:804.4px">1,301.16</div><div class="t num" style="right:697.9px;top:804.4px">62.41</div><div class="t num" style="right:571.0px;top:804.4px">70.81</div><div class="t num" style="right:433.1px;top:804.4px">48,829.58</div><div class="t num" style="right:288.1px;top:804.4px">232,126.10</div><div class="t num" style="right:176.3px;top:804.4px">183,296.52</div><div class="r" style="left:770px;width:900px;top:822.96px;height:19.79px;background:#427e8b"></div><svg class="a" style="left:799px;top:825.7px;opacity:.85" width="10" height="10"><rect x="0.65" y="0.65" width="8.6" height="8.8" rx="1.8" fill="none" stroke="#c3ccd0" stroke-width="1.3"/><path d="M2.6,5H7 M4.8,2.8V7.2" stroke="#c3ccd0" stroke-width="1.4" fill="none"/></svg><div class="t" style="left:817.5px;top:824.2px">9</div><div class="t num" style="right:815.0px;top:824.2px">1,267.67</div><div class="t num" style="right:697.9px;top:824.2px">65.51</div><div class="t num" style="right:571.0px;top:824.2px">81.11</div><div class="t num" style="right:433.1px;top:824.2px">35,758.29</div><div class="t num" style="right:288.1px;top:824.2px">264,540.25</div><div class="t num" style="right:176.3px;top:824.2px">228,781.96</div><div class="r" style="left:770px;width:900px;top:841.20px;height:20.7px;background:#427e8b"></div><div class="r" style="left:770px;width:900px;top:841.20px;height:1px;background:#4a8290"></div><div class="t b" style="left:796.2px;top:843.5px">Total</div><div class="t num b yl" style="right:815.0px;top:843.5px">602,561.35</div><div class="t num b yl" style="right:697.9px;top:843.5px">66.65</div><div class="t num b yl" style="right:571.0px;top:843.5px">99.46</div><div class="t num b yl" style="right:433.1px;top:843.5px">40,341,354.97</div><div class="t num b yl" style="right:288.1px;top:843.5px">66,436,274.90</div><div class="t num b yl" style="right:176.3px;top:843.5px">26,094,919.93</div>
 <div class="a" style="left:889px;top:648px;width:1px;height:215px;border-left:1px dotted #2f7ab5"></div>
 <div class="a" style="left:1029px;top:648px;width:1px;height:215px;background:#2e4856"></div>
 <div class="a" style="left:1146px;top:648px;width:1px;height:215px;background:#2e4856"></div>
 <div class="a" style="left:1273px;top:648px;width:1px;height:215px;background:#2e4856"></div>
 <div class="a" style="left:1411px;top:648px;width:1px;height:215px;background:#2e4856"></div>
 <div class="a" style="left:1556px;top:648px;width:1px;height:215px;background:#2e4856"></div>
</div>
<!-- hedge scrollbars -->
<div class="a" style="left:1621.3px;top:603.3px;width:9.4px;height:258px;background:#92a3aa;border-radius:5px"></div>
<div class="a" style="left:1622.3px;top:611px;width:7.4px;height:55px;background:#3f5158;border-radius:4px"></div>
<div class="a" style="left:770px;top:862.4px;width:851px;height:9.8px;background:#92a3aa;border-radius:5px"></div>
<div class="a" style="left:770px;top:862.4px;width:798.5px;height:9.8px;background:#3f5158;border:1px solid #aab6bb;border-radius:5px"></div>
</body></html>
